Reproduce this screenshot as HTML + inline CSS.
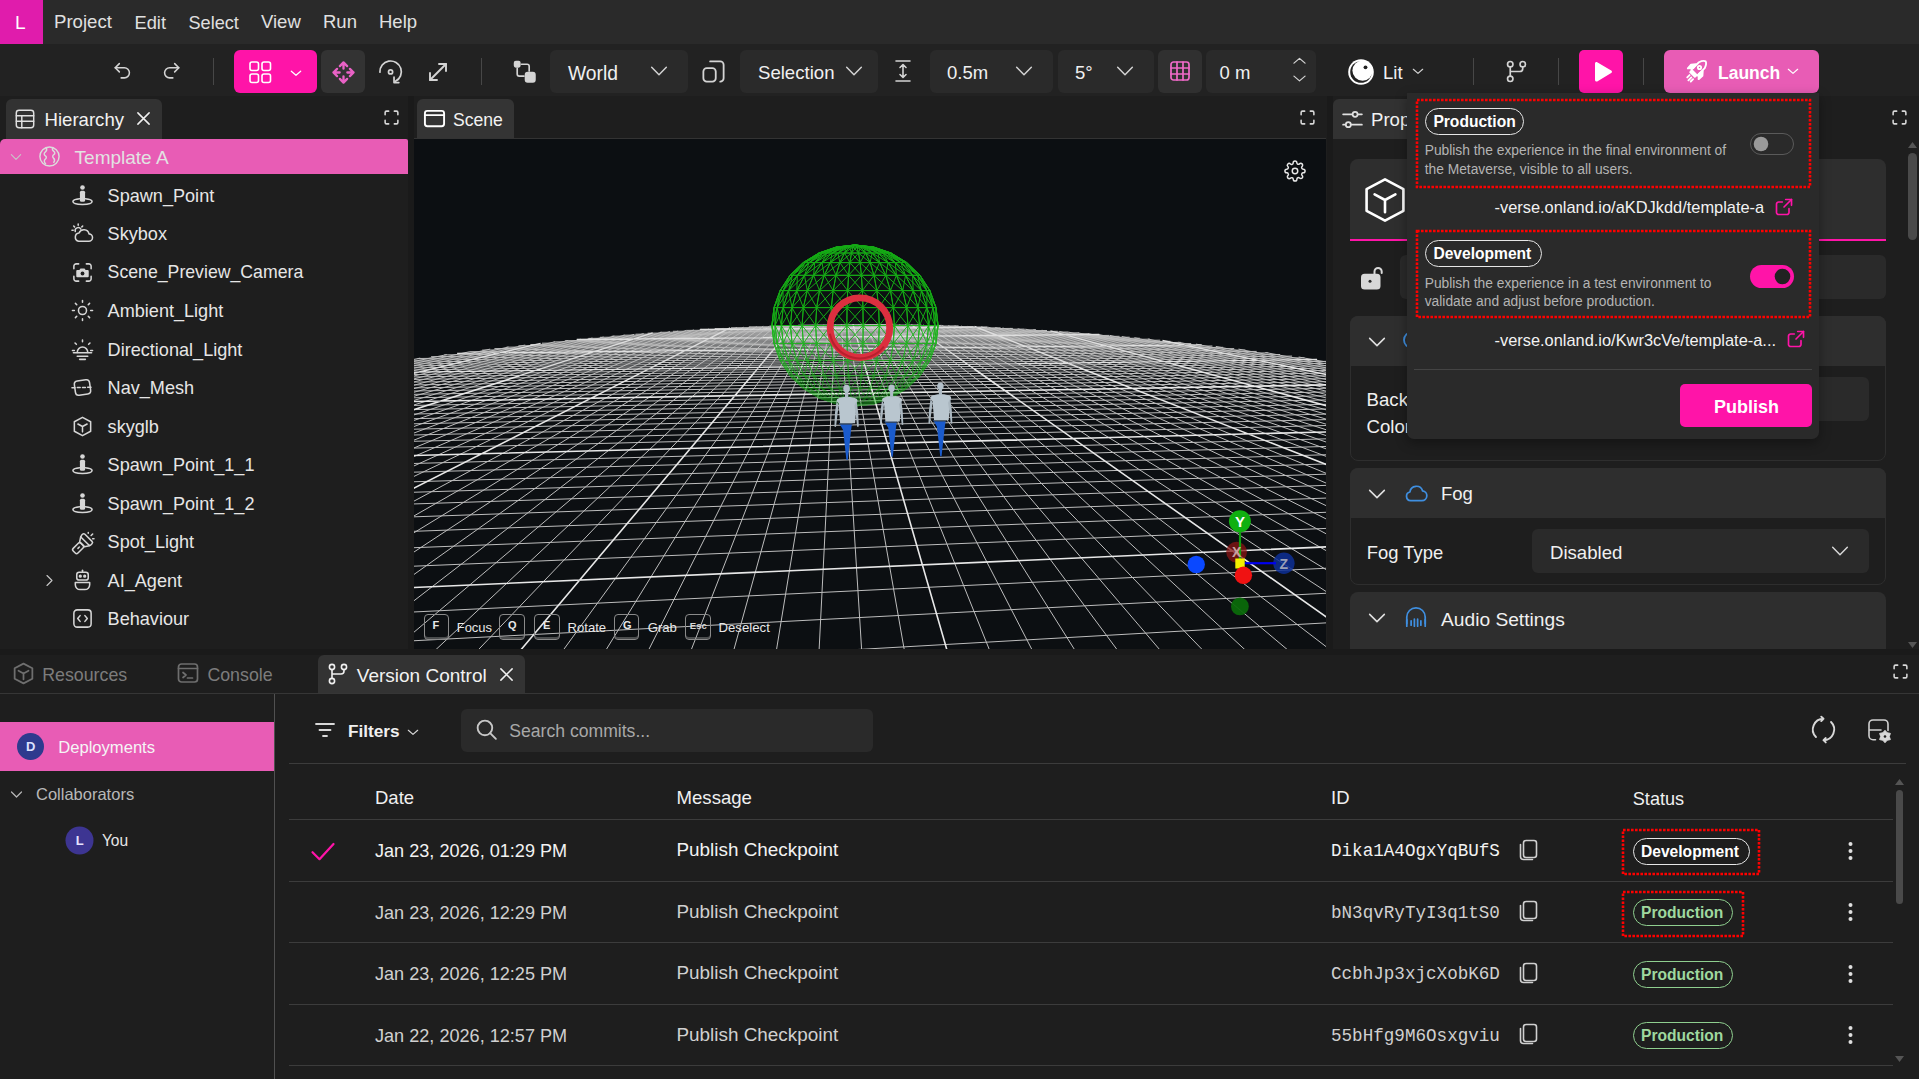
<!DOCTYPE html><html><head><meta charset="utf-8"><style>
html,body{margin:0;padding:0;width:1919px;height:1079px;overflow:hidden;background:#1e1e1e;font-family:"Liberation Sans",sans-serif}
body>div,body>svg{position:absolute}
.t{position:absolute;white-space:nowrap}
svg{overflow:visible}
</style></head><body>
<div style="left:0px;top:0px;width:1919px;height:44px;background:#2a2a2a;"></div>
<div style="left:0px;top:44px;width:1919px;height:52px;background:#222222;"></div>
<div style="left:0px;top:96px;width:1919px;height:559px;background:#1a1a1a;"></div>
<div style="left:0px;top:96px;width:408px;height:553px;background:#1e1e1e;"></div>
<div style="left:414px;top:96px;width:913px;height:553px;background:#1e1e1e;"></div>
<div style="left:1333px;top:96px;width:586px;height:553px;background:#1e1e1e;"></div>
<div style="left:0px;top:655px;width:1919px;height:424px;background:#1e1e1e;"></div>
<div style="left:0px;top:0px;width:43px;height:44px;background:#e01cac;"></div>
<div class="t" style="left:15px;top:12.85px;font-size:19px;line-height:19px;color:#ffffff;font-family:'Liberation Sans',sans-serif;">L</div>
<div class="t" style="left:54px;top:13.39px;font-size:18.6px;line-height:18.6px;color:#e0e0e0;font-family:'Liberation Sans',sans-serif;">Project</div>
<div class="t" style="left:134.5px;top:13.64px;font-size:18.3px;line-height:18.3px;color:#e0e0e0;font-family:'Liberation Sans',sans-serif;">Edit</div>
<div class="t" style="left:188.5px;top:13.81px;font-size:18.1px;line-height:18.1px;color:#e0e0e0;font-family:'Liberation Sans',sans-serif;">Select</div>
<div class="t" style="left:261px;top:13.47px;font-size:18.5px;line-height:18.5px;color:#e0e0e0;font-family:'Liberation Sans',sans-serif;">View</div>
<div class="t" style="left:323px;top:13.47px;font-size:18.5px;line-height:18.5px;color:#e0e0e0;font-family:'Liberation Sans',sans-serif;">Run</div>
<div class="t" style="left:379px;top:13.47px;font-size:18.5px;line-height:18.5px;color:#e0e0e0;font-family:'Liberation Sans',sans-serif;">Help</div>
<svg style="position:absolute;left:112px;top:60px;" width="22" height="22" viewBox="0 0 24 24" fill="none" stroke="#d4d4d4" stroke-width="1.7" stroke-linecap="round" stroke-linejoin="round"><path d="M8 13 3.5 8.5 8 4"/><path d="M3.5 8.5h10a5.5 5.5 0 0 1 0 11H10"/></svg>
<svg style="position:absolute;left:159.5px;top:60px;" width="22" height="22" viewBox="0 0 24 24" fill="none" stroke="#d4d4d4" stroke-width="1.7" stroke-linecap="round" stroke-linejoin="round"><path d="M16 13l4.5-4.5L16 4"/><path d="M20.5 8.5h-10a5.5 5.5 0 0 0 0 11H14"/></svg>
<div style="left:213px;top:58px;width:1px;height:27px;background:#474747;"></div>
<div style="left:234px;top:50px;width:83px;height:43px;background:#ff14a8;border-radius:6px"></div>
<svg style="position:absolute;left:248px;top:59.5px;" width="24" height="24" viewBox="0 0 24 24" fill="none" stroke="#ffffff" stroke-width="1.6" stroke-linecap="round" stroke-linejoin="round"><rect x="2" y="2" width="8.5" height="8.5" rx="2"/><rect x="14" y="2" width="8.5" height="8.5" rx="2"/><rect x="2" y="14" width="8.5" height="8.5" rx="2"/><rect x="14" y="14" width="8.5" height="8.5" rx="2"/></svg>
<svg style="position:absolute;left:289px;top:66px;" width="14" height="14" viewBox="0 0 24 24" fill="none" stroke="#ffffff" stroke-width="2.2" stroke-linecap="round" stroke-linejoin="round"><path d="M4 9l8 7 8-7"/></svg>
<div style="left:321px;top:50px;width:44px;height:43px;background:#333333;border-radius:6px"></div>
<svg style="position:absolute;left:331.5px;top:60.5px;" width="23" height="23" viewBox="0 0 24 24" fill="none" stroke="#ea62c6" stroke-width="2.4" stroke-linecap="round" stroke-linejoin="round"><path d="M12 1.5v6.5M8.2 5.3 12 1.5l3.8 3.8M12 22.5V16M8.2 18.7l3.8 3.8 3.8-3.8M1.5 12H8M5.3 8.2 1.5 12l3.8 3.8M22.5 12H16M18.7 8.2l3.8 3.8-3.8 3.8"/></svg>
<svg style="position:absolute;left:378px;top:59px;" width="26" height="26" viewBox="0 0 24 24" fill="none" stroke="#d4d4d4" stroke-width="1.6" stroke-linecap="round" stroke-linejoin="round"><path d="M1.75 12.2A9.9 9.9 0 1 1 16.1 20.6"/><path d="M14.8 16.8v5h4.4"/><circle cx="11.6" cy="11.9" r="1.9"/></svg>
<svg style="position:absolute;left:426px;top:60px;" width="24" height="24" viewBox="0 0 24 24" fill="none" stroke="#d4d4d4" stroke-width="1.9" stroke-linecap="round" stroke-linejoin="round"><path d="M4 20 20 4"/><path d="M13 4h7v7"/><path d="M11 20H4v-7"/></svg>
<div style="left:481px;top:58px;width:1px;height:27px;background:#474747;"></div>
<svg style="position:absolute;left:512px;top:59px;" width="25" height="25" viewBox="0 0 24 24" fill="none" stroke="#d4d4d4" stroke-width="1.6" stroke-linecap="round" stroke-linejoin="round"><rect x="2.5" y="2.5" width="5" height="5" rx="1.2" fill="#d4d4d4"/><rect x="13" y="13" width="9" height="9" rx="2" fill="#d4d4d4"/><path d="M9 5h5.5a2 2 0 0 1 2 2v4.5"/><path d="M5 9v5.5a2 2 0 0 0 2 2h4.5"/></svg>
<div style="left:550px;top:50px;width:138px;height:43px;background:#2a2a2a;border-radius:6px"></div>
<div class="t" style="left:568px;top:63.59px;font-size:19.3px;line-height:19.3px;color:#f0f0f0;font-family:'Liberation Sans',sans-serif;">World</div>
<svg style="position:absolute;left:648px;top:60px;" width="22" height="22" viewBox="0 0 24 24" fill="none" stroke="#d4d4d4" stroke-width="1.6" stroke-linecap="round" stroke-linejoin="round"><path d="M4 8l8 8 8-8"/></svg>
<svg style="position:absolute;left:700px;top:58px;" width="27" height="27" viewBox="0 0 24 24" fill="none" stroke="#d4d4d4" stroke-width="1.6" stroke-linecap="round" stroke-linejoin="round"><rect x="3" y="9" width="11" height="12" rx="3"/><path d="M9 3h9a3 3 0 0 1 3 3v12a3 3 0 0 1-3 3"/></svg>
<div style="left:740px;top:50px;width:138px;height:43px;background:#2a2a2a;border-radius:6px"></div>
<div class="t" style="left:758px;top:64.19px;font-size:18.6px;line-height:18.6px;color:#f0f0f0;font-family:'Liberation Sans',sans-serif;">Selection</div>
<svg style="position:absolute;left:843px;top:60px;" width="22" height="22" viewBox="0 0 24 24" fill="none" stroke="#d4d4d4" stroke-width="1.6" stroke-linecap="round" stroke-linejoin="round"><path d="M4 8l8 8 8-8"/></svg>
<svg style="position:absolute;left:891px;top:59px;" width="24" height="24" viewBox="0 0 24 24" fill="none" stroke="#d4d4d4" stroke-width="1.6" stroke-linecap="round" stroke-linejoin="round"><path d="M5 2h14M5 22h14M12 6v12M9 8.5l3-3 3 3M9 15.5l3 3 3-3"/></svg>
<div style="left:930px;top:50px;width:123px;height:43px;background:#2a2a2a;border-radius:6px"></div>
<div class="t" style="left:947px;top:64.28px;font-size:18.5px;line-height:18.5px;color:#f0f0f0;font-family:'Liberation Sans',sans-serif;">0.5m</div>
<svg style="position:absolute;left:1013px;top:60px;" width="22" height="22" viewBox="0 0 24 24" fill="none" stroke="#d4d4d4" stroke-width="1.6" stroke-linecap="round" stroke-linejoin="round"><path d="M4 8l8 8 8-8"/></svg>
<div style="left:1058px;top:50px;width:96px;height:43px;background:#2a2a2a;border-radius:6px"></div>
<div class="t" style="left:1075px;top:64.28px;font-size:18.5px;line-height:18.5px;color:#f0f0f0;font-family:'Liberation Sans',sans-serif;">5°</div>
<svg style="position:absolute;left:1114px;top:60px;" width="22" height="22" viewBox="0 0 24 24" fill="none" stroke="#d4d4d4" stroke-width="1.6" stroke-linecap="round" stroke-linejoin="round"><path d="M4 8l8 8 8-8"/></svg>
<div style="left:1158px;top:50px;width:44px;height:43px;background:#303030;border-radius:6px"></div>
<svg style="position:absolute;left:1168px;top:59px;" width="24" height="24" viewBox="0 0 24 24" fill="none" stroke="#f06ac8" stroke-width="1.7" stroke-linecap="round" stroke-linejoin="round"><rect x="3" y="3" width="18" height="18" rx="2.5"/><path d="M9 3v18M15 3v18M3 9h18M3 15h18"/></svg>
<div style="left:1206px;top:50px;width:110px;height:43px;background:#2a2a2a;border-radius:6px"></div>
<div class="t" style="left:1219.5px;top:64.28px;font-size:18.5px;line-height:18.5px;color:#f0f0f0;font-family:'Liberation Sans',sans-serif;">0 m</div>
<svg style="position:absolute;left:1290px;top:56px;" width="19" height="19" viewBox="0 0 24 24" fill="none" stroke="#d4d4d4" stroke-width="1.6" stroke-linecap="round" stroke-linejoin="round"><path d="M5 9l7-6 7 6"/></svg>
<svg style="position:absolute;left:1290px;top:69px;" width="19" height="19" viewBox="0 0 24 24" fill="none" stroke="#d4d4d4" stroke-width="1.6" stroke-linecap="round" stroke-linejoin="round"><path d="M5 9l7 6 7-6"/></svg>
<svg style="position:absolute;left:1347.5px;top:58.5px;" width="26" height="26" viewBox="0 0 26 26" fill="none"><circle cx="13" cy="13" r="12.8" fill="#ffffff"/><circle cx="13" cy="13" r="10.8" fill="#222222"/><circle cx="14.6" cy="11.6" r="10.2" fill="#ffffff"/><circle cx="17.5" cy="8.3" r="1.9" fill="#222222"/></svg>
<div class="t" style="left:1383px;top:64.28px;font-size:18.5px;line-height:18.5px;color:#f0f0f0;font-family:'Liberation Sans',sans-serif;">Lit</div>
<svg style="position:absolute;left:1411px;top:64px;" width="14" height="14" viewBox="0 0 24 24" fill="none" stroke="#d4d4d4" stroke-width="2" stroke-linecap="round" stroke-linejoin="round"><path d="M4 9l8 7 8-7"/></svg>
<div style="left:1473px;top:58px;width:1px;height:27px;background:#474747;"></div>
<svg style="position:absolute;left:1504px;top:59px;" width="25" height="25" viewBox="0 0 24 24" fill="none" stroke="#d4d4d4" stroke-width="1.6" stroke-linecap="round" stroke-linejoin="round"><circle cx="6" cy="5" r="2.6"/><circle cx="18" cy="5" r="2.6"/><circle cx="6" cy="19" r="2.6"/><path d="M6 7.6v8.8M18 7.6v1.4a3 3 0 0 1-3 3H6"/></svg>
<div style="left:1558px;top:58px;width:1px;height:27px;background:#474747;"></div>
<div style="left:1579px;top:50px;width:44px;height:43px;background:#ff14a8;border-radius:5px"></div>
<svg style="position:absolute;left:1590px;top:59px;" width="26" height="26" viewBox="0 0 26 26" fill="none"><path d="M5 4.5c0-1.2 1.2-1.9 2.2-1.3l14 8.3c1 .6 1 2 0 2.6l-14 8.3C6.2 23 5 22.3 5 21.1z" fill="#ffffff"/></svg>
<div style="left:1643px;top:58px;width:1px;height:27px;background:#474747;"></div>
<div style="left:1664px;top:50px;width:155px;height:43px;background:#e85cb5;border-radius:6px"></div>
<svg style="position:absolute;left:1682px;top:57px;" width="28" height="28" viewBox="0 0 24 24" fill="none" stroke="#ffffff" stroke-width="1.6" stroke-linecap="round" stroke-linejoin="round"><path d="M14.5 4.5c2.5-1.2 5-1.2 5.8-.8.4.8.4 3.3-.8 5.8l-6.5 6.5-5-5z"/><circle cx="15" cy="9" r="1.4"/><path d="M9.5 9.5 5 9.8 7.8 6.5l4.2-.3zM14.5 14.5l-.3 4.5 3.3-2.8.3-4.2z" fill="#ffffff"/><path d="M8.5 11.5 12.5 15.5 11 17 7 13z" fill="#ffffff"/><path d="M6.5 15.5l-2 2M8 17.5l-2.5 2.5M9.5 19l-2 2"/></svg>
<div class="t" style="left:1718px;top:65.12px;font-size:17.5px;line-height:17.5px;color:#ffffff;font-family:'Liberation Sans',sans-serif;font-weight:bold;">Launch</div>
<svg style="position:absolute;left:1786px;top:64px;" width="14" height="14" viewBox="0 0 24 24" fill="none" stroke="#ffffff" stroke-width="2" stroke-linecap="round" stroke-linejoin="round"><path d="M4 9l8 7 8-7"/></svg>
<div style="left:6px;top:99px;width:156px;height:40px;background:#323232;border-radius:6px 6px 0 0"></div>
<svg style="position:absolute;left:14px;top:108px;" width="22" height="22" viewBox="0 0 24 24" fill="none" stroke="#e0e0e0" stroke-width="1.6" stroke-linecap="round" stroke-linejoin="round"><rect x="2.5" y="2.5" width="19" height="19" rx="3"/><path d="M2.5 8.5h19M2.5 14.5h19M8.5 8.5v13"/></svg>
<div class="t" style="left:44.5px;top:111.19px;font-size:18.6px;line-height:18.6px;color:#f2f2f2;font-family:'Liberation Sans',sans-serif;">Hierarchy</div>
<svg style="position:absolute;left:136px;top:111px;" width="15" height="15" viewBox="0 0 24 24" fill="none" stroke="#f0f0f0" stroke-width="2.4" stroke-linecap="round" stroke-linejoin="round"><path d="M3 3l18 18M21 3 3 21"/></svg>
<svg style="position:absolute;left:382.5px;top:108.5px;" width="17" height="17" viewBox="0 0 24 24" fill="none" stroke="#d8d8d8" stroke-width="2.2" stroke-linecap="round" stroke-linejoin="round"><path d="M3 8V5a2 2 0 0 1 2-2h3M16 3h3a2 2 0 0 1 2 2v3M21 16v3a2 2 0 0 1-2 2h-3M8 21H5a2 2 0 0 1-2-2v-3"/></svg>
<div style="left:414px;top:138px;width:912px;height:1px;background:#333333;"></div>
<div style="left:417px;top:99px;width:97px;height:39px;background:#343434;border-radius:6px 6px 0 0"></div>
<svg style="position:absolute;left:423px;top:107px;" width="23" height="23" viewBox="0 0 24 24" fill="none" stroke="#ffffff" stroke-width="2" stroke-linecap="round" stroke-linejoin="round"><rect x="2" y="4" width="20" height="16" rx="2.5"/><path d="M2 8.5h20"/></svg>
<div class="t" style="left:453px;top:112.04px;font-size:17.6px;line-height:17.6px;color:#f2f2f2;font-family:'Liberation Sans',sans-serif;">Scene</div>
<svg style="position:absolute;left:1299px;top:108.5px;" width="17" height="17" viewBox="0 0 24 24" fill="none" stroke="#d8d8d8" stroke-width="2.2" stroke-linecap="round" stroke-linejoin="round"><path d="M3 8V5a2 2 0 0 1 2-2h3M16 3h3a2 2 0 0 1 2 2v3M21 16v3a2 2 0 0 1-2 2h-3M8 21H5a2 2 0 0 1-2-2v-3"/></svg>
<div style="left:1333px;top:99px;width:90px;height:40px;background:#323232;border-radius:6px 0 0 0"></div>
<svg style="position:absolute;left:1340px;top:107px;" width="25" height="25" viewBox="0 0 24 24" fill="none" stroke="#e0e0e0" stroke-width="1.7" stroke-linecap="round" stroke-linejoin="round"><path d="M3 7h18M3 17h18"/><circle cx="14.5" cy="7" r="2.4" fill="#323232"/><circle cx="8" cy="17" r="2.4" fill="#323232"/></svg>
<div class="t" style="left:1371px;top:111.19px;font-size:18.6px;line-height:18.6px;color:#f2f2f2;font-family:'Liberation Sans',sans-serif;">Prop</div>
<svg style="position:absolute;left:1891px;top:108.5px;" width="17" height="17" viewBox="0 0 24 24" fill="none" stroke="#d8d8d8" stroke-width="2.2" stroke-linecap="round" stroke-linejoin="round"><path d="M3 8V5a2 2 0 0 1 2-2h3M16 3h3a2 2 0 0 1 2 2v3M21 16v3a2 2 0 0 1-2 2h-3M8 21H5a2 2 0 0 1-2-2v-3"/></svg>
<div style="left:0px;top:139px;width:408px;height:35px;background:#e85cb5;border-radius:5px 2px 0 0"></div>
<svg style="position:absolute;left:9px;top:150px;" width="14" height="14" viewBox="0 0 24 24" fill="none" stroke="#c8c8c8" stroke-width="1.8" stroke-linecap="round" stroke-linejoin="round"><path d="M4 8l8 8 8-8"/></svg>
<svg style="position:absolute;left:38px;top:145px;" width="23" height="23" viewBox="0 0 24 24" fill="none" stroke="#dcdcdc" stroke-width="1.5" stroke-linecap="round" stroke-linejoin="round"><circle cx="12" cy="12" r="10"/><path d="M8.5 2.8c1 1.8.5 3.5-1 4.7-1.6 1.2-1.2 3 .2 3.8 1.6 1 1 2.8-.3 3.7-1.3 1-1 3 .5 4.5M15.5 2.8c-.8 1.5-.3 3 1 3.8 1.5 1 1.2 2.8 0 3.5-1.4.8-1.5 2.5-.3 3.6 1.2 1 1.3 2.8.3 4.4"/></svg>
<div class="t" style="left:74.6px;top:147.65px;font-size:19px;line-height:19px;color:#e2e2e2;font-family:'Liberation Sans',sans-serif;">Template A</div>
<svg style="position:absolute;left:71px;top:183.5px;" width="23" height="23" viewBox="0 0 24 24" fill="none" stroke="#d6d6d6" stroke-width="1.6" stroke-linecap="round" stroke-linejoin="round"><circle cx="12" cy="3.6" r="2.4" fill="#d6d6d6" stroke="none"/><rect x="9.3" y="7" width="5.4" height="11.5" rx="1.6" fill="#d6d6d6" stroke="none"/><path d="M9 15.3C4.6 15.8 2 16.9 2 18.3c0 1.8 4.5 3 10 3s10-1.2 10-3c0-1.4-2.6-2.5-7-3"/></svg>
<div class="t" style="left:107.6px;top:186.92px;font-size:18.1px;line-height:18.1px;color:#e6e6e6;font-family:'Liberation Sans',sans-serif;">Spawn_Point</div>
<svg style="position:absolute;left:71px;top:222.0px;" width="23" height="23" viewBox="0 0 24 24" fill="none" stroke="#d6d6d6" stroke-width="1.6" stroke-linecap="round" stroke-linejoin="round"><path d="M7.5 2v1.3M2.8 4.2l.9.9M12.2 4.2l-.9.9M1 8.5h1.3"/><path d="M4.5 10a3.2 3.2 0 0 1 5.8-2.6"/><path d="M8 20h10.5a3.8 3.8 0 0 0 .3-7.6A5.5 5.5 0 0 0 8.4 11.5 4.3 4.3 0 0 0 8 20z"/></svg>
<div class="t" style="left:107.6px;top:225.42px;font-size:18.1px;line-height:18.1px;color:#e6e6e6;font-family:'Liberation Sans',sans-serif;">Skybox</div>
<svg style="position:absolute;left:71px;top:260.5px;" width="23" height="23" viewBox="0 0 24 24" fill="none" stroke="#d6d6d6" stroke-width="1.6" stroke-linecap="round" stroke-linejoin="round"><path d="M3 8V5.5A2.5 2.5 0 0 1 5.5 3H8M16 3h2.5A2.5 2.5 0 0 1 21 5.5V8M21 16v2.5a2.5 2.5 0 0 1-2.5 2.5H16M8 21H5.5A2.5 2.5 0 0 1 3 18.5V16"/><path d="M6.5 9.5h2.2l1.2-1.8h4.2l1.2 1.8h2.2c.6 0 1 .4 1 1v5.5c0 .6-.4 1-1 1h-11c-.6 0-1-.4-1-1v-5.5c0-.6.4-1 1-1z" fill="#d6d6d6" stroke="none"/><circle cx="12" cy="13" r="2" fill="#1e1e1e" stroke="none"/></svg>
<div class="t" style="left:107.6px;top:264.25px;font-size:17.7px;line-height:17.7px;color:#e6e6e6;font-family:'Liberation Sans',sans-serif;">Scene_Preview_Camera</div>
<svg style="position:absolute;left:71px;top:299.0px;" width="23" height="23" viewBox="0 0 24 24" fill="none" stroke="#d6d6d6" stroke-width="1.6" stroke-linecap="round" stroke-linejoin="round"><circle cx="12" cy="12" r="4.2"/><path d="M12 1.5v2M12 20.5v2M1.5 12h2M20.5 12h2M4.6 4.6l1.4 1.4M18 18l1.4 1.4M4.6 19.4 6 18M18 6l1.4-1.4"/></svg>
<div class="t" style="left:107.6px;top:302.42px;font-size:18.1px;line-height:18.1px;color:#e6e6e6;font-family:'Liberation Sans',sans-serif;">Ambient_Light</div>
<svg style="position:absolute;left:71px;top:337.5px;" width="23" height="23" viewBox="0 0 24 24" fill="none" stroke="#d6d6d6" stroke-width="1.6" stroke-linecap="round" stroke-linejoin="round"><path d="M12 2v2M4.2 5.2l1.4 1.4M19.8 5.2l-1.4 1.4M1.5 13h2M20.5 13h2"/><path d="M6.5 15a5.5 5.5 0 0 1 11 0"/><path d="M2.5 15.5h19M6.5 19h11M9 22.3h6"/></svg>
<div class="t" style="left:107.6px;top:340.92px;font-size:18.1px;line-height:18.1px;color:#e6e6e6;font-family:'Liberation Sans',sans-serif;">Directional_Light</div>
<svg style="position:absolute;left:71px;top:376.0px;" width="23" height="23" viewBox="0 0 24 24" fill="none" stroke="#d6d6d6" stroke-width="1.6" stroke-linecap="round" stroke-linejoin="round"><g transform="rotate(-8 12 12)"><rect x="4" y="4.5" width="16" height="15" rx="3.5"/></g><path d="M1 12.3h3.2M6.6 12.1h3M12 11.9h3M17.4 11.7h3.5"/></svg>
<div class="t" style="left:107.6px;top:379.42px;font-size:18.1px;line-height:18.1px;color:#e6e6e6;font-family:'Liberation Sans',sans-serif;">Nav_Mesh</div>
<svg style="position:absolute;left:71px;top:414.5px;" width="23" height="23" viewBox="0 0 24 24" fill="none" stroke="#d6d6d6" stroke-width="1.6" stroke-linecap="round" stroke-linejoin="round"><path d="M12 2.5 20.5 7v10L12 21.5 3.5 17V7z"/><path d="M12 12 7.2 9.4M12 12l4.8-2.6M12 12v5.6"/></svg>
<div class="t" style="left:107.6px;top:417.92px;font-size:18.1px;line-height:18.1px;color:#e6e6e6;font-family:'Liberation Sans',sans-serif;">skyglb</div>
<svg style="position:absolute;left:71px;top:453.0px;" width="23" height="23" viewBox="0 0 24 24" fill="none" stroke="#d6d6d6" stroke-width="1.6" stroke-linecap="round" stroke-linejoin="round"><circle cx="12" cy="3.6" r="2.4" fill="#d6d6d6" stroke="none"/><rect x="9.3" y="7" width="5.4" height="11.5" rx="1.6" fill="#d6d6d6" stroke="none"/><path d="M9 15.3C4.6 15.8 2 16.9 2 18.3c0 1.8 4.5 3 10 3s10-1.2 10-3c0-1.4-2.6-2.5-7-3"/></svg>
<div class="t" style="left:107.6px;top:456.42px;font-size:18.1px;line-height:18.1px;color:#e6e6e6;font-family:'Liberation Sans',sans-serif;">Spawn_Point_1_1</div>
<svg style="position:absolute;left:71px;top:491.5px;" width="23" height="23" viewBox="0 0 24 24" fill="none" stroke="#d6d6d6" stroke-width="1.6" stroke-linecap="round" stroke-linejoin="round"><circle cx="12" cy="3.6" r="2.4" fill="#d6d6d6" stroke="none"/><rect x="9.3" y="7" width="5.4" height="11.5" rx="1.6" fill="#d6d6d6" stroke="none"/><path d="M9 15.3C4.6 15.8 2 16.9 2 18.3c0 1.8 4.5 3 10 3s10-1.2 10-3c0-1.4-2.6-2.5-7-3"/></svg>
<div class="t" style="left:107.6px;top:494.92px;font-size:18.1px;line-height:18.1px;color:#e6e6e6;font-family:'Liberation Sans',sans-serif;">Spawn_Point_1_2</div>
<svg style="position:absolute;left:71px;top:530.0px;" width="23" height="23" viewBox="0 0 24 24" fill="none" stroke="#d6d6d6" stroke-width="1.6" stroke-linecap="round" stroke-linejoin="round"><g transform="translate(-1.2 3.6) rotate(45 12 12)"><rect x="5" y="1.5" width="14" height="5" rx="1.8"/><path d="M5.5 6.5 8.5 11h7l3-4.5"/><rect x="8.5" y="11" width="7" height="11.5" rx="2"/><path d="M12 15v2"/></g><path d="M18 2.6v.9M22.6 4.2l-1.6 1.6M24 9.2h-1.4"/></svg>
<div class="t" style="left:107.6px;top:533.41px;font-size:18.1px;line-height:18.1px;color:#e6e6e6;font-family:'Liberation Sans',sans-serif;">Spot_Light</div>
<svg style="position:absolute;left:71px;top:568.5px;" width="23" height="23" viewBox="0 0 24 24" fill="none" stroke="#d6d6d6" stroke-width="1.6" stroke-linecap="round" stroke-linejoin="round"><rect x="6" y="3.5" width="12" height="8" rx="2.5"/><path d="M12 1.2v2.3"/><circle cx="9.7" cy="7.5" r=".9" fill="#d6d6d6"/><circle cx="14.3" cy="7.5" r=".9" fill="#d6d6d6"/><path d="M4.5 14h15v2.5a5 5 0 0 1-5 5h-5a5 5 0 0 1-5-5z"/></svg>
<div class="t" style="left:107.6px;top:571.91px;font-size:18.1px;line-height:18.1px;color:#e6e6e6;font-family:'Liberation Sans',sans-serif;">AI_Agent</div>
<svg style="position:absolute;left:71px;top:607.0px;" width="23" height="23" viewBox="0 0 24 24" fill="none" stroke="#d6d6d6" stroke-width="1.6" stroke-linecap="round" stroke-linejoin="round"><rect x="3" y="3" width="18" height="18" rx="3.5"/><path d="M9.5 9 7 12l2.5 3M14.5 9 17 12l-2.5 3"/></svg>
<div class="t" style="left:107.6px;top:610.41px;font-size:18.1px;line-height:18.1px;color:#e6e6e6;font-family:'Liberation Sans',sans-serif;">Behaviour</div>
<svg style="position:absolute;left:42px;top:572.8px;" width="15" height="15" viewBox="0 0 24 24" fill="none" stroke="#c8c8c8" stroke-width="1.8" stroke-linecap="round" stroke-linejoin="round"><path d="M8 4l8 8-8 8"/></svg>
<div style="left:1349.5px;top:159px;width:536px;height:82px;background:#2e2e2e;border-radius:8px 8px 0 0;border-bottom:2px solid #ff14a8;box-sizing:border-box"></div>
<svg style="position:absolute;left:1358.9px;top:173.7px;" width="52" height="52" viewBox="0 0 24 24" fill="none" stroke="#ffffff" stroke-width="1.2" stroke-linecap="round" stroke-linejoin="round"><path d="M12 2.5 20.5 7v10L12 21.5 3.5 17V7z"/><path d="M12 12 7.2 9.4M12 12l4.8-2.6M12 12v5.6"/></svg>
<svg style="position:absolute;left:1360px;top:264px;" width="24" height="27" viewBox="0 0 24 27" fill="none"><path d="M14.5 10V7.5a3.6 3.6 0 0 1 7.2 0V9" stroke="#d8d8d8" stroke-width="2" stroke-linecap="round"/><rect x="1" y="9.8" width="19.5" height="15.8" rx="3.6" fill="#d8d8d8"/><circle cx="10" cy="17.2" r="1.5" fill="#2a2a2a"/></svg>
<div style="left:1400px;top:255px;width:486px;height:44px;background:#2a2a2a;border-radius:6px"></div>
<div style="left:1349.5px;top:316px;width:536px;height:145px;background:#1e1e1e;border-radius:8px;border:1px solid #2e2e2e;box-sizing:border-box"></div>
<div style="left:1349.5px;top:316px;width:536px;height:50px;background:#2e2e2e;border-radius:8px 8px 0 0"></div>
<svg style="position:absolute;left:1366px;top:331px;" width="22" height="22" viewBox="0 0 24 24" fill="none" stroke="#e0e0e0" stroke-width="1.7" stroke-linecap="round" stroke-linejoin="round"><path d="M4 8l8 8 8-8"/></svg>
<svg style="position:absolute;left:1400px;top:330px;" width="16" height="20" viewBox="0 0 16 20" fill="none"><path d="M12 2a8 8 0 1 0 0 16" stroke="#3f8fe0" stroke-width="1.8" fill="none"/></svg>
<div class="t" style="left:1366.6px;top:391.19px;font-size:18.6px;line-height:18.6px;color:#f0f0f0;font-family:'Liberation Sans',sans-serif;">Backg</div>
<div class="t" style="left:1366.6px;top:418.19px;font-size:18.6px;line-height:18.6px;color:#f0f0f0;font-family:'Liberation Sans',sans-serif;">Color</div>
<div style="left:1532px;top:377px;width:337px;height:44px;background:#2a2a2a;border-radius:6px"></div>
<div style="left:1349.5px;top:468px;width:536px;height:117px;background:#1e1e1e;border-radius:8px;border:1px solid #2e2e2e;box-sizing:border-box"></div>
<div style="left:1349.5px;top:468px;width:536px;height:50px;background:#2e2e2e;border-radius:8px 8px 0 0"></div>
<svg style="position:absolute;left:1366px;top:483px;" width="22" height="22" viewBox="0 0 24 24" fill="none" stroke="#e0e0e0" stroke-width="1.7" stroke-linecap="round" stroke-linejoin="round"><path d="M4 8l8 8 8-8"/></svg>
<svg style="position:absolute;left:1403px;top:480px;" width="26" height="26" viewBox="0 0 24 24" fill="none" stroke="#3f8fe0" stroke-width="1.6" stroke-linecap="round" stroke-linejoin="round"><path d="M7 19h10.5a4.5 4.5 0 0 0 .6-8.96A6 6 0 0 0 6.4 11.1 4 4 0 0 0 7 19z"/></svg>
<div class="t" style="left:1441px;top:485.27px;font-size:18.5px;line-height:18.5px;color:#f0f0f0;font-family:'Liberation Sans',sans-serif;">Fog</div>
<div class="t" style="left:1366.8px;top:544.36px;font-size:18.4px;line-height:18.4px;color:#f0f0f0;font-family:'Liberation Sans',sans-serif;">Fog Type</div>
<div style="left:1532px;top:529px;width:337px;height:44px;background:#2a2a2a;border-radius:6px"></div>
<div class="t" style="left:1550px;top:544.19px;font-size:18.6px;line-height:18.6px;color:#f0f0f0;font-family:'Liberation Sans',sans-serif;">Disabled</div>
<svg style="position:absolute;left:1829px;top:540px;" width="22" height="22" viewBox="0 0 24 24" fill="none" stroke="#d8d8d8" stroke-width="1.6" stroke-linecap="round" stroke-linejoin="round"><path d="M4 8l8 8 8-8"/></svg>
<div style="left:1349.5px;top:592px;width:536px;height:57px;background:#2e2e2e;border-radius:8px 8px 0 0"></div>
<svg style="position:absolute;left:1366px;top:607px;" width="22" height="22" viewBox="0 0 24 24" fill="none" stroke="#e0e0e0" stroke-width="1.7" stroke-linecap="round" stroke-linejoin="round"><path d="M4 8l8 8 8-8"/></svg>
<svg style="position:absolute;left:1403px;top:604px;" width="26" height="26" viewBox="0 0 24 24" fill="none" stroke="#3f8fe0" stroke-width="1.6" stroke-linecap="round" stroke-linejoin="round"><path d="M3.5 18v-6a8.5 8.5 0 0 1 17 0v6"/><path d="M3.5 14.5v6M20.5 14.5v6M7.5 15.5v4M10.5 14v6.5M13.5 14v6.5M16.5 15.5v4"/></svg>
<div class="t" style="left:1441px;top:609.68px;font-size:19.2px;line-height:19.2px;color:#f0f0f0;font-family:'Liberation Sans',sans-serif;">Audio Settings</div>
<div style="left:1908px;top:153px;width:9px;height:87px;background:#4a4a4a;border-radius:5px"></div>
<svg style="position:absolute;left:1907px;top:141px;" width="11" height="8" viewBox="0 0 11 8" fill="none"><path d="M1 7 5.5 1 10 7z" fill="#555"/></svg>
<svg style="position:absolute;left:1907px;top:641px;" width="11" height="8" viewBox="0 0 11 8" fill="none"><path d="M1 1 5.5 7 10 1z" fill="#555"/></svg>
<div style="left:1407px;top:93px;width:412px;height:346px;background:#2a2a2a;border-radius:0 0 7px 7px;box-shadow:0 4px 12px rgba(0,0,0,.35)"></div>
<svg style="position:absolute;left:1416px;top:99px;" width="395" height="89" viewBox="0 0 395 89" fill="none"><rect x="1" y="1" width="393" height="87" stroke="#ff0000" stroke-width="2.6" stroke-dasharray="2.6 1.4" fill="none"/></svg>
<div style="left:1425px;top:108px;width:99px;height:27px;background:transparent;border:1.6px solid #e6e6e6;border-radius:13.5px;box-sizing:border-box"></div>
<div class="t" style="left:1433.4px;top:113.54px;font-size:15.6px;line-height:15.6px;color:#ffffff;font-family:'Liberation Sans',sans-serif;font-weight:bold;">Production</div>
<div class="t" style="left:1424.7px;top:144.27px;font-size:13.8px;line-height:13.8px;color:#b4b4b4;font-family:'Liberation Sans',sans-serif;">Publish the experience in the final environment of</div>
<div class="t" style="left:1424.7px;top:163.27px;font-size:13.8px;line-height:13.8px;color:#b4b4b4;font-family:'Liberation Sans',sans-serif;">the Metaverse, visible to all users.</div>
<div style="left:1749.5px;top:133px;width:44.5px;height:22px;background:transparent;border:1.5px solid #5a5a5a;border-radius:11px;box-sizing:border-box"></div>
<svg style="position:absolute;left:1750px;top:133px;" width="22" height="22" viewBox="0 0 22 22" fill="none"><circle cx="11" cy="11" r="7.3" fill="#9a9a9a"/></svg>
<div class="t" style="left:1494.5px;top:199.06px;font-size:16.4px;line-height:16.4px;color:#f2f2f2;font-family:'Liberation Sans',sans-serif;">-verse.onland.io/aKDJkdd/template-a</div>
<svg style="position:absolute;left:1774px;top:197px;" width="20" height="20" viewBox="0 0 24 24" fill="none" stroke="#ff14a8" stroke-width="2" stroke-linecap="round" stroke-linejoin="round"><path d="M14 3h7v7"/><path d="M21 3l-9 9"/><path d="M18 14v4.5a2.5 2.5 0 0 1-2.5 2.5h-10A2.5 2.5 0 0 1 3 18.5v-10A2.5 2.5 0 0 1 5.5 6H10"/></svg>
<svg style="position:absolute;left:1416px;top:230px;" width="395" height="88" viewBox="0 0 395 88" fill="none"><rect x="1" y="1" width="393" height="86" stroke="#ff0000" stroke-width="2.6" stroke-dasharray="2.6 1.4" fill="none"/></svg>
<div style="left:1425px;top:240px;width:117px;height:27px;background:transparent;border:1.6px solid #e6e6e6;border-radius:13.5px;box-sizing:border-box"></div>
<div class="t" style="left:1433.4px;top:245.74px;font-size:15.6px;line-height:15.6px;color:#ffffff;font-family:'Liberation Sans',sans-serif;font-weight:bold;">Development</div>
<div class="t" style="left:1424.7px;top:276.77px;font-size:13.8px;line-height:13.8px;color:#b4b4b4;font-family:'Liberation Sans',sans-serif;">Publish the experience in a test environment to</div>
<div class="t" style="left:1424.7px;top:295.27px;font-size:13.8px;line-height:13.8px;color:#b4b4b4;font-family:'Liberation Sans',sans-serif;">validate and adjust before production.</div>
<div style="left:1749.5px;top:264.5px;width:44.5px;height:23px;background:#ff14a8;border-radius:11.5px"></div>
<svg style="position:absolute;left:1771px;top:264.5px;" width="23" height="23" viewBox="0 0 23 23" fill="none"><circle cx="11.5" cy="11.5" r="7.8" fill="#222222"/></svg>
<div class="t" style="left:1494.5px;top:332.06px;font-size:16.4px;line-height:16.4px;color:#f2f2f2;font-family:'Liberation Sans',sans-serif;">-verse.onland.io/Kwr3cVe/template-a...</div>
<svg style="position:absolute;left:1786px;top:329px;" width="20" height="20" viewBox="0 0 24 24" fill="none" stroke="#ff14a8" stroke-width="2" stroke-linecap="round" stroke-linejoin="round"><path d="M14 3h7v7"/><path d="M21 3l-9 9"/><path d="M18 14v4.5a2.5 2.5 0 0 1-2.5 2.5h-10A2.5 2.5 0 0 1 3 18.5v-10A2.5 2.5 0 0 1 5.5 6H10"/></svg>
<div style="left:1414px;top:368.5px;width:398px;height:1px;background:#444444;"></div>
<div style="left:1680px;top:384px;width:132px;height:43px;background:#ff14a8;border-radius:5px"></div>
<div class="t" style="left:1714px;top:397.70px;font-size:18px;line-height:18px;color:#ffffff;font-family:'Liberation Sans',sans-serif;font-weight:bold;">Publish</div>
<svg style="position:absolute;left:11px;top:661px;" width="25" height="25" viewBox="0 0 24 24" fill="none" stroke="#6e6e6e" stroke-width="1.7" stroke-linecap="round" stroke-linejoin="round"><path d="M12 2.5 20.5 7v10L12 21.5 3.5 17V7z"/><path d="M12 12 7.2 9.4M12 12l4.8-2.6M12 12v5.6"/></svg>
<div class="t" style="left:42.2px;top:666.87px;font-size:17.8px;line-height:17.8px;color:#7c7c7c;font-family:'Liberation Sans',sans-serif;">Resources</div>
<svg style="position:absolute;left:176px;top:661px;" width="24" height="24" viewBox="0 0 24 24" fill="none" stroke="#6e6e6e" stroke-width="1.7" stroke-linecap="round" stroke-linejoin="round"><rect x="2.5" y="3" width="19" height="18" rx="3"/><path d="M2.5 7.5h19M7 11.5l3 2.5-3 2.5M11.5 17h5"/></svg>
<div class="t" style="left:207.4px;top:666.87px;font-size:17.8px;line-height:17.8px;color:#7c7c7c;font-family:'Liberation Sans',sans-serif;">Console</div>
<div style="left:318px;top:655px;width:207px;height:38px;background:#333333;border-radius:6px 6px 0 0"></div>
<svg style="position:absolute;left:326px;top:662px;" width="24" height="24" viewBox="0 0 24 24" fill="none" stroke="#f0f0f0" stroke-width="1.6" stroke-linecap="round" stroke-linejoin="round"><circle cx="6" cy="5" r="2.6"/><circle cx="18" cy="5" r="2.6"/><circle cx="6" cy="19" r="2.6"/><path d="M6 7.6v8.8M18 7.6v1.4a3 3 0 0 1-3 3H6"/></svg>
<div class="t" style="left:356.8px;top:665.85px;font-size:19px;line-height:19px;color:#f2f2f2;font-family:'Liberation Sans',sans-serif;">Version Control</div>
<svg style="position:absolute;left:499px;top:667px;" width="15" height="15" viewBox="0 0 24 24" fill="none" stroke="#f0f0f0" stroke-width="2.4" stroke-linecap="round" stroke-linejoin="round"><path d="M3 3l18 18M21 3 3 21"/></svg>
<svg style="position:absolute;left:1891.5px;top:663px;" width="17" height="17" viewBox="0 0 24 24" fill="none" stroke="#d8d8d8" stroke-width="2.2" stroke-linecap="round" stroke-linejoin="round"><path d="M3 8V5a2 2 0 0 1 2-2h3M16 3h3a2 2 0 0 1 2 2v3M21 16v3a2 2 0 0 1-2 2h-3M8 21H5a2 2 0 0 1-2-2v-3"/></svg>
<div style="left:0px;top:693px;width:1919px;height:1px;background:#363636;"></div>
<div style="left:274px;top:694px;width:1px;height:385px;background:#505050;"></div>
<div style="left:0px;top:722px;width:274px;height:49px;background:#e85cb5;"></div>
<svg style="position:absolute;left:16px;top:732px;" width="29" height="29" viewBox="0 0 29 29" fill="none"><circle cx="14.5" cy="14.5" r="13.5" fill="#2e3a8e"/></svg>
<div class="t" style="left:25.9px;top:740.15px;font-size:13px;line-height:13px;color:#dce2ff;font-family:'Liberation Sans',sans-serif;font-weight:bold;">D</div>
<div class="t" style="left:58.2px;top:740.39px;font-size:16.6px;line-height:16.6px;color:#f5f5f5;font-family:'Liberation Sans',sans-serif;">Deployments</div>
<svg style="position:absolute;left:9px;top:787px;" width="15" height="15" viewBox="0 0 24 24" fill="none" stroke="#b8b8b8" stroke-width="1.9" stroke-linecap="round" stroke-linejoin="round"><path d="M4 8l8 8 8-8"/></svg>
<div class="t" style="left:36px;top:786.48px;font-size:16.5px;line-height:16.5px;color:#b8b8b8;font-family:'Liberation Sans',sans-serif;">Collaborators</div>
<svg style="position:absolute;left:65px;top:826px;" width="29" height="29" viewBox="0 0 29 29" fill="none"><circle cx="14.5" cy="14.5" r="14" fill="#3d3592"/></svg>
<div class="t" style="left:75.8px;top:833.65px;font-size:13px;line-height:13px;color:#e6e2ff;font-family:'Liberation Sans',sans-serif;font-weight:bold;">L</div>
<div class="t" style="left:101.9px;top:833.24px;font-size:15.6px;line-height:15.6px;color:#e6e6e6;font-family:'Liberation Sans',sans-serif;">You</div>
<svg style="position:absolute;left:313px;top:718px;" width="24" height="24" viewBox="0 0 24 24" fill="none" stroke="#d8d8d8" stroke-width="1.8" stroke-linecap="round" stroke-linejoin="round"><path d="M3 6h18M6.5 12h11M10 18h4"/></svg>
<div class="t" style="left:348px;top:722.88px;font-size:17.2px;line-height:17.2px;color:#f0f0f0;font-family:'Liberation Sans',sans-serif;font-weight:bold;">Filters</div>
<svg style="position:absolute;left:406px;top:725px;" width="14" height="14" viewBox="0 0 24 24" fill="none" stroke="#d8d8d8" stroke-width="2" stroke-linecap="round" stroke-linejoin="round"><path d="M4 9l8 7 8-7"/></svg>
<div style="left:461px;top:708.5px;width:412px;height:43.5px;background:#2a2a2a;border-radius:6px"></div>
<svg style="position:absolute;left:474px;top:717px;" width="25" height="25" viewBox="0 0 24 24" fill="none" stroke="#c8c8c8" stroke-width="1.8" stroke-linecap="round" stroke-linejoin="round"><circle cx="10.5" cy="10.5" r="7"/><path d="M15.5 15.5 21 21"/></svg>
<div class="t" style="left:509.3px;top:722.54px;font-size:17.6px;line-height:17.6px;color:#a8a8a8;font-family:'Liberation Sans',sans-serif;">Search commits...</div>
<svg style="position:absolute;left:1810.2px;top:716.2px;" width="27" height="27" viewBox="0 0 24 24" fill="none" stroke="#d8d8d8" stroke-width="1.7" stroke-linecap="round" stroke-linejoin="round"><path d="M12 2.5A9.5 9.5 0 0 0 5.3 18.7M10 0.6l2 1.9-2 2M18.7 5.3A9.5 9.5 0 0 1 12 21.5M14 19.6l-2 1.9 2 2"/></svg>
<svg style="position:absolute;left:1867px;top:718px;" width="27" height="27" viewBox="0 0 27 27" fill="none"><path d="M8.5 21.7H6a4 4 0 0 1-4-4V6a4 4 0 0 1 4-4h11a4 4 0 0 1 4 4v6.5M2 12h12" stroke="#d0d0d0" stroke-width="1.6" stroke-linecap="round" fill="none"/><path d="M18.00 12.30L20.15 14.78L23.37 15.40L22.30 18.50L23.37 21.60L20.15 22.22L18.00 24.70L15.85 22.22L12.63 21.60L13.70 18.50L12.63 15.40L15.85 14.78z" fill="#d8d8d8" stroke="#d8d8d8" stroke-width="1" stroke-linejoin="round"/><circle cx="18" cy="18.5" r="1.3" fill="#1e1e1e"/></svg>
<div style="left:289px;top:763px;width:1617px;height:1px;background:#3c3c3c;"></div>
<div class="t" style="left:375px;top:789.27px;font-size:18.5px;line-height:18.5px;color:#f0f0f0;font-family:'Liberation Sans',sans-serif;">Date</div>
<div class="t" style="left:676.5px;top:789.19px;font-size:18.6px;line-height:18.6px;color:#f0f0f0;font-family:'Liberation Sans',sans-serif;">Message</div>
<div class="t" style="left:1331px;top:789.27px;font-size:18.5px;line-height:18.5px;color:#f0f0f0;font-family:'Liberation Sans',sans-serif;">ID</div>
<div class="t" style="left:1632.8px;top:789.62px;font-size:18.1px;line-height:18.1px;color:#f0f0f0;font-family:'Liberation Sans',sans-serif;">Status</div>
<div style="left:289px;top:819px;width:1604px;height:1px;background:#3c3c3c;"></div>
<svg style="position:absolute;left:309px;top:837px;" width="28" height="28" viewBox="0 0 24 24" fill="none" stroke="#ff14a8" stroke-width="1.9" stroke-linecap="round" stroke-linejoin="round"><path d="M3 13l6 6L21 6"/></svg>
<div class="t" style="left:375px;top:842.12px;font-size:18.1px;line-height:18.1px;color:#f2f2f2;font-family:'Liberation Sans',sans-serif;">Jan 23, 2026, 01:29 PM</div>
<div class="t" style="left:676.5px;top:841.43px;font-size:18.9px;line-height:18.9px;color:#f2f2f2;font-family:'Liberation Sans',sans-serif;">Publish Checkpoint</div>
<div class="t" style="left:1331px;top:843.12px;font-size:17.6px;line-height:17.6px;color:#f2f2f2;font-family:'Liberation Mono',monospace;">Dika1A4OgxYqBUfS</div>
<svg style="position:absolute;left:1516px;top:837.5px;" width="24" height="24" viewBox="0 0 24 24" fill="none" stroke="#d0d0d0" stroke-width="1.6" stroke-linecap="round" stroke-linejoin="round"><rect x="7.5" y="2.5" width="13" height="17" rx="2.5"/><path d="M4.5 6.5v12a3 3 0 0 0 3 3h9"/></svg>
<svg style="position:absolute;left:1622px;top:829.0px;" width="138" height="46" viewBox="0 0 138 46" fill="none"><rect x="1" y="1" width="136" height="44" stroke="#ff0000" stroke-width="2.6" stroke-dasharray="2.6 1.4" fill="none"/></svg>
<div style="left:1632.5px;top:837.5px;width:117px;height:27px;background:transparent;border:1.6px solid #e6e6e6;border-radius:13.5px;box-sizing:border-box"></div>
<div class="t" style="left:1641px;top:843.74px;font-size:15.6px;line-height:15.6px;color:#ffffff;font-family:'Liberation Sans',sans-serif;font-weight:bold;">Development</div>
<svg style="position:absolute;left:1845px;top:840.5px;" width="11" height="20" viewBox="0 0 11 20" fill="none"><circle cx="5.5" cy="3" r="2" fill="#e0e0e0"/><circle cx="5.5" cy="10" r="2" fill="#e0e0e0"/><circle cx="5.5" cy="17" r="2" fill="#e0e0e0"/></svg>
<div style="left:289px;top:880.5px;width:1604px;height:1px;background:#3c3c3c;"></div>
<div class="t" style="left:375px;top:903.62px;font-size:18.1px;line-height:18.1px;color:#d0d0d0;font-family:'Liberation Sans',sans-serif;">Jan 23, 2026, 12:29 PM</div>
<div class="t" style="left:676.5px;top:902.93px;font-size:18.9px;line-height:18.9px;color:#d0d0d0;font-family:'Liberation Sans',sans-serif;">Publish Checkpoint</div>
<div class="t" style="left:1331px;top:904.62px;font-size:17.6px;line-height:17.6px;color:#d0d0d0;font-family:'Liberation Mono',monospace;">bN3qvRyTyI3q1tS0</div>
<svg style="position:absolute;left:1516px;top:899.0px;" width="24" height="24" viewBox="0 0 24 24" fill="none" stroke="#d0d0d0" stroke-width="1.6" stroke-linecap="round" stroke-linejoin="round"><rect x="7.5" y="2.5" width="13" height="17" rx="2.5"/><path d="M4.5 6.5v12a3 3 0 0 0 3 3h9"/></svg>
<svg style="position:absolute;left:1622px;top:890.5px;" width="122" height="46" viewBox="0 0 122 46" fill="none"><rect x="1" y="1" width="120" height="44" stroke="#ff0000" stroke-width="2.6" stroke-dasharray="2.6 1.4" fill="none"/></svg>
<div style="left:1632.5px;top:899.0px;width:100px;height:27px;background:transparent;border:1.6px solid #8fcf8f;border-radius:13.5px;box-sizing:border-box"></div>
<div class="t" style="left:1641px;top:905.24px;font-size:15.6px;line-height:15.6px;color:#9fd89f;font-family:'Liberation Sans',sans-serif;font-weight:bold;">Production</div>
<svg style="position:absolute;left:1845px;top:902.0px;" width="11" height="20" viewBox="0 0 11 20" fill="none"><circle cx="5.5" cy="3" r="2" fill="#e0e0e0"/><circle cx="5.5" cy="10" r="2" fill="#e0e0e0"/><circle cx="5.5" cy="17" r="2" fill="#e0e0e0"/></svg>
<div style="left:289px;top:942.0px;width:1604px;height:1px;background:#3c3c3c;"></div>
<div class="t" style="left:375px;top:965.12px;font-size:18.1px;line-height:18.1px;color:#d0d0d0;font-family:'Liberation Sans',sans-serif;">Jan 23, 2026, 12:25 PM</div>
<div class="t" style="left:676.5px;top:964.43px;font-size:18.9px;line-height:18.9px;color:#d0d0d0;font-family:'Liberation Sans',sans-serif;">Publish Checkpoint</div>
<div class="t" style="left:1331px;top:966.12px;font-size:17.6px;line-height:17.6px;color:#d0d0d0;font-family:'Liberation Mono',monospace;">CcbhJp3xjcXobK6D</div>
<svg style="position:absolute;left:1516px;top:960.5px;" width="24" height="24" viewBox="0 0 24 24" fill="none" stroke="#d0d0d0" stroke-width="1.6" stroke-linecap="round" stroke-linejoin="round"><rect x="7.5" y="2.5" width="13" height="17" rx="2.5"/><path d="M4.5 6.5v12a3 3 0 0 0 3 3h9"/></svg>
<div style="left:1632.5px;top:960.5px;width:100px;height:27px;background:transparent;border:1.6px solid #8fcf8f;border-radius:13.5px;box-sizing:border-box"></div>
<div class="t" style="left:1641px;top:966.74px;font-size:15.6px;line-height:15.6px;color:#9fd89f;font-family:'Liberation Sans',sans-serif;font-weight:bold;">Production</div>
<svg style="position:absolute;left:1845px;top:963.5px;" width="11" height="20" viewBox="0 0 11 20" fill="none"><circle cx="5.5" cy="3" r="2" fill="#e0e0e0"/><circle cx="5.5" cy="10" r="2" fill="#e0e0e0"/><circle cx="5.5" cy="17" r="2" fill="#e0e0e0"/></svg>
<div style="left:289px;top:1003.5px;width:1604px;height:1px;background:#3c3c3c;"></div>
<div class="t" style="left:375px;top:1026.62px;font-size:18.1px;line-height:18.1px;color:#d0d0d0;font-family:'Liberation Sans',sans-serif;">Jan 22, 2026, 12:57 PM</div>
<div class="t" style="left:676.5px;top:1025.93px;font-size:18.9px;line-height:18.9px;color:#d0d0d0;font-family:'Liberation Sans',sans-serif;">Publish Checkpoint</div>
<div class="t" style="left:1331px;top:1027.62px;font-size:17.6px;line-height:17.6px;color:#d0d0d0;font-family:'Liberation Mono',monospace;">55bHfg9M6Osxgviu</div>
<svg style="position:absolute;left:1516px;top:1022.0px;" width="24" height="24" viewBox="0 0 24 24" fill="none" stroke="#d0d0d0" stroke-width="1.6" stroke-linecap="round" stroke-linejoin="round"><rect x="7.5" y="2.5" width="13" height="17" rx="2.5"/><path d="M4.5 6.5v12a3 3 0 0 0 3 3h9"/></svg>
<div style="left:1632.5px;top:1022.0px;width:100px;height:27px;background:transparent;border:1.6px solid #8fcf8f;border-radius:13.5px;box-sizing:border-box"></div>
<div class="t" style="left:1641px;top:1028.24px;font-size:15.6px;line-height:15.6px;color:#9fd89f;font-family:'Liberation Sans',sans-serif;font-weight:bold;">Production</div>
<svg style="position:absolute;left:1845px;top:1025.0px;" width="11" height="20" viewBox="0 0 11 20" fill="none"><circle cx="5.5" cy="3" r="2" fill="#e0e0e0"/><circle cx="5.5" cy="10" r="2" fill="#e0e0e0"/><circle cx="5.5" cy="17" r="2" fill="#e0e0e0"/></svg>
<div style="left:289px;top:1065.0px;width:1604px;height:1px;background:#3c3c3c;"></div>
<div style="left:1896px;top:790px;width:7px;height:114px;background:#4a4a4a;border-radius:4px"></div>
<svg style="position:absolute;left:1894px;top:778px;" width="11" height="8" viewBox="0 0 11 8" fill="none"><path d="M1 7 5.5 1 10 7z" fill="#555"/></svg>
<svg style="position:absolute;left:1894px;top:1055px;" width="11" height="8" viewBox="0 0 11 8" fill="none"><path d="M1 1 5.5 7 10 1z" fill="#555"/></svg>
<svg style="position:absolute;left:414px;top:139px;overflow:hidden" width="912" height="510" viewBox="0 0 912 510"><rect width="912" height="510" fill="#0c0f12"/><path d="M-5.0 221.4L6.2 219.1M-5.0 223.5L32.8 215.6M-5.0 225.6L55.8 212.7M-5.0 227.9L76.2 210.1M-5.0 230.3L94.5 208.0M-5.0 232.8L111.2 206.0M-5.0 238.2L140.8 202.8M-5.0 241.1L154.1 201.4M-5.0 244.2L166.6 200.2M-5.0 247.5L178.4 199.0M-5.0 251.0L189.6 198.0M-5.0 254.7L200.3 197.0M-5.0 258.7L210.5 196.1M-5.0 262.9L220.2 195.3M-5.0 267.5L229.6 194.5M-5.0 277.6L247.4 193.2M-5.0 283.2L255.9 192.5M-5.0 289.3L264.1 192.0M-5.0 295.9L272.1 191.4M-5.0 303.1L279.8 190.9M-5.0 311.0L287.4 190.4M-5.0 319.7L294.8 190.0M-5.0 329.2L302.0 189.6M-5.0 339.8L309.1 189.2M-5.0 364.8L322.9 188.5M-5.0 379.8L329.6 188.2M-5.0 396.8L336.2 187.9M-5.0 416.3L342.7 187.6M-5.0 439.0L349.2 187.3M-5.0 465.6L355.5 187.1M-5.0 497.4L361.7 186.9M17.2 515.0L367.9 186.6M60.3 515.0L374.1 186.5M146.4 515.0L386.2 186.1M189.5 515.0L392.1 186.0M232.6 515.0L398.1 185.8M275.6 515.0L404.0 185.7M318.7 515.0L409.8 185.6M361.8 515.0L415.7 185.5M404.9 515.0L421.5 185.5M447.9 515.0L427.3 185.4M491.0 515.0L433.1 185.3M577.1 515.0L444.7 185.3M620.2 515.0L450.5 185.3M663.3 515.0L456.3 185.3M706.3 515.0L462.1 185.3M749.4 515.0L467.9 185.3M792.5 515.0L473.7 185.4M835.6 515.0L479.6 185.4M878.6 515.0L485.5 185.5M917.0 511.4L491.4 185.6M917.0 455.7L503.3 185.8M917.0 433.6L509.4 185.9M917.0 414.4L515.5 186.1M917.0 397.4L521.7 186.2M917.0 382.4L527.9 186.4M917.0 369.0L534.3 186.6M917.0 357.0L540.7 186.8M917.0 346.2L547.2 187.0M917.0 336.3L553.8 187.3M917.0 319.2L567.3 187.8M917.0 311.6L574.2 188.2M917.0 304.7L581.3 188.5M917.0 298.2L588.6 188.9M917.0 292.3L596.0 189.3M917.0 286.7L603.7 189.7M917.0 281.6L611.5 190.1M917.0 276.7L619.5 190.6M917.0 272.2L627.8 191.2M917.0 264.0L645.3 192.4M917.0 260.2L654.6 193.1M917.0 256.7L664.2 193.8M917.0 253.3L674.3 194.6M917.0 250.2L684.9 195.5M917.0 247.1L696.0 196.4M917.0 244.3L707.8 197.5M917.0 241.6L720.4 198.7M917.0 239.0L733.9 200.0M917.0 234.2L764.4 203.2M917.0 231.9L782.0 205.1M917.0 229.8L801.8 207.4M917.0 227.7L824.5 210.1M917.0 225.7L851.4 213.5M917.0 223.9L884.7 218.0M364.5 515.0L917.0 483.6M-5.0 502.0L917.0 454.0M-5.0 473.2L917.0 429.0M-5.0 427.4L917.0 389.2M-5.0 408.9L917.0 373.1M-5.0 392.5L917.0 358.9M-5.0 378.0L917.0 346.2M-5.0 365.1L917.0 335.0M-5.0 353.4L917.0 324.8M-5.0 342.9L917.0 315.6M-5.0 333.3L917.0 307.3M-5.0 324.6L917.0 299.7M-5.0 309.2L917.0 286.4M-5.0 302.4L917.0 280.5M-5.0 296.1L917.0 275.0M-5.0 290.3L917.0 269.9M-5.0 284.9L917.0 265.2M-5.0 279.8L917.0 260.8M-5.0 275.1L917.0 256.7M-5.0 270.7L917.0 252.9M-5.0 266.5L917.0 249.2M-5.0 258.9L917.0 242.6M-5.0 255.4L917.0 239.6M-5.0 252.1L917.0 236.7M-5.0 249.0L917.0 234.0M-5.0 246.0L917.0 231.4M-5.0 243.2L917.0 229.0M-5.0 240.5L917.0 226.7M-5.0 238.0L917.0 224.4M-5.0 235.6L916.1 222.3M-5.0 231.0L890.5 218.8M-5.0 228.9L878.1 217.1M-5.0 226.9L866.1 215.5M-5.0 225.0L854.3 213.9M-5.0 223.1L842.7 212.4M-5.0 221.3L831.4 211.0M3.6 219.5L820.2 209.6M17.1 217.7L809.2 208.3M30.2 215.9L798.4 207.0M55.7 212.7L777.2 204.6M68.2 211.1L766.8 203.4M80.4 209.6L756.4 202.3M92.5 208.2L746.2 201.2M104.4 206.8L736.0 200.2M116.3 205.5L725.8 199.2M128.0 204.2L715.7 198.2M139.6 202.9L705.6 197.3M151.2 201.7L695.5 196.4M174.4 199.4L675.1 194.7M186.0 198.3L664.8 193.8M197.7 197.2L654.4 193.0M209.5 196.2L643.8 192.3M221.5 195.2L633.0 191.5M233.6 194.2L622.0 190.8M246.1 193.3L610.6 190.1M258.9 192.3L598.8 189.4M272.2 191.4L586.6 188.8M300.9 189.6L559.7 187.5M316.9 188.8L544.6 186.9M334.8 187.9L527.6 186.4M355.9 187.1L507.4 185.9M384.2 186.2L479.9 185.4" stroke="#bdbdbd" stroke-width="1.0" fill="none"/><path d="M-5.0 235.4L126.6 204.3M105.6 236.7L238.7 193.8M225.1 234.9L316.1 188.8M340.6 233.2L380.1 186.3M452.3 231.6L438.9 185.3M560.3 230.0L497.3 185.7M664.8 228.5L560.5 187.5M766.1 227.0L636.4 191.8M864.1 225.5L748.5 201.5M-5.0 233.2L903.1 220.5M43.1 214.3L787.7 205.8M162.8 200.5L685.3 195.5M286.1 190.5L573.6 188.1" stroke="#dedede" stroke-width="1.35" fill="none"/><path d="M-5.0 272.3L105.6 236.7M-5.0 351.6L225.1 234.9M103.4 515.0L340.6 233.2M534.1 515.0L452.3 231.6M917.0 481.3L560.3 230.0M917.0 327.4L664.8 228.5M917.0 268.0L766.1 227.0M917.0 236.5L864.1 225.5M-5.0 448.7L917.0 407.7M-5.0 316.6L917.0 292.8M-5.0 262.6L917.0 245.8" stroke="#e8e8e8" stroke-width="1.6" fill="none"/><defs><linearGradient id="sg" x1="0" y1="0" x2="0" y2="1"><stop offset="0" stop-color="#fff"/><stop offset="0.55" stop-color="#fff"/><stop offset="1" stop-color="#777"/></linearGradient><mask id="sm" maskUnits="userSpaceOnUse" x="0" y="0" width="912" height="510"><rect x="351" y="101.5" width="180" height="170" fill="url(#sg)"/></mask></defs><path d="M459.5 108.0L458.8 108.0L457.4 108.0L455.4 108.0L452.8 108.0L449.8 108.0L446.4 108.0L442.8 108.0L439.2 108.0L435.6 108.0L432.2 108.0L429.2 108.0L426.6 108.0L424.6 108.0L423.2 108.0L422.5 108.0L422.5 108.0L423.2 108.0L424.6 108.0L426.6 108.0L429.2 108.0L432.2 108.0L435.6 108.0L439.2 108.0L442.8 108.0L446.4 108.0L449.8 108.0L452.8 108.0L455.4 108.0L457.4 108.0L458.8 108.0L459.5 108.0L459.5 108.0M477.1 114.0L475.7 114.0L473.0 114.0L469.0 114.0L464.0 114.0L458.1 114.0L451.5 114.0L444.6 114.0L437.5 114.0L430.5 114.0L423.9 114.0L418.0 114.0L413.0 114.0L409.1 114.0L406.3 114.0L404.9 114.0L404.9 114.0L406.3 114.0L409.0 114.0L413.0 114.0L418.0 114.0L423.9 114.0L430.5 114.0L437.4 114.0L444.5 114.0L451.5 114.0L458.1 114.0L464.0 114.0L469.0 114.0L472.9 114.0L475.7 114.0L477.1 114.0L477.1 114.0M492.8 123.6L490.8 123.6L486.9 123.6L481.3 123.6L474.0 123.6L465.6 123.6L456.1 123.6L446.1 123.6L435.9 123.6L425.9 123.6L416.5 123.6L408.0 123.6L400.8 123.6L395.1 123.6L391.2 123.6L389.2 123.6L389.2 123.6L391.2 123.6L395.1 123.6L400.7 123.6L408.0 123.6L416.4 123.6L425.9 123.6L435.9 123.6L446.1 123.6L456.1 123.6L465.5 123.6L474.0 123.6L481.2 123.6L486.9 123.6L490.8 123.6L492.8 123.6L492.8 123.6M506.0 136.3L503.5 136.3L498.6 136.3L491.5 136.3L482.4 136.3L471.8 136.3L460.0 136.3L447.4 136.3L434.6 136.3L422.1 136.3L410.3 136.3L399.6 136.3L390.6 136.3L383.4 136.3L378.5 136.3L376.0 136.3L376.0 136.3L378.5 136.3L383.4 136.3L390.5 136.3L399.6 136.3L410.2 136.3L422.0 136.3L434.6 136.3L447.4 136.3L459.9 136.3L471.7 136.3L482.4 136.3L491.4 136.3L498.6 136.3L503.5 136.3L506.0 136.3L506.0 136.3M515.9 151.6L513.0 151.6L507.4 151.6L499.2 151.6L488.8 151.6L476.5 151.6L462.9 151.6L448.4 151.6L433.7 151.6L419.2 151.6L405.6 151.6L393.3 151.6L382.9 151.6L374.7 151.6L369.0 151.6L366.1 151.6L366.1 151.6L369.0 151.6L374.6 151.6L382.8 151.6L393.2 151.6L405.5 151.6L419.1 151.6L433.6 151.6L448.3 151.6L462.8 151.6L476.4 151.6L488.7 151.6L499.1 151.6L507.3 151.6L513.0 151.6L515.9 151.6L515.9 151.6M522.0 168.6L518.9 168.6L512.8 168.6L504.0 168.6L492.7 168.6L479.4 168.6L464.7 168.6L449.0 168.6L433.1 168.6L417.4 168.6L402.7 168.6L389.4 168.6L378.1 168.6L369.2 168.6L363.1 168.6L360.0 168.6L360.0 168.6L363.1 168.6L369.2 168.6L378.0 168.6L389.3 168.6L402.6 168.6L417.3 168.6L433.0 168.6L448.9 168.6L464.6 168.6L479.3 168.6L492.6 168.6L503.9 168.6L512.8 168.6L518.9 168.6L522.0 168.6L522.0 168.6M524.1 186.5L520.9 186.5L514.7 186.5L505.6 186.5L494.0 186.5L480.4 186.5L465.3 186.5L449.2 186.5L432.9 186.5L416.8 186.5L401.7 186.5L388.1 186.5L376.5 186.5L367.4 186.5L361.1 186.5L357.9 186.5L357.9 186.5L361.1 186.5L367.3 186.5L376.4 186.5L388.0 186.5L401.6 186.5L416.7 186.5L432.8 186.5L449.1 186.5L465.2 186.5L480.3 186.5L493.9 186.5L505.5 186.5L514.6 186.5L520.9 186.5L524.1 186.5L524.1 186.5M522.0 204.4L518.9 204.4L512.8 204.4L504.0 204.4L492.7 204.4L479.4 204.4L464.7 204.4L449.0 204.4L433.1 204.4L417.4 204.4L402.7 204.4L389.4 204.4L378.1 204.4L369.2 204.4L363.1 204.4L360.0 204.4L360.0 204.4L363.1 204.4L369.2 204.4L378.0 204.4L389.3 204.4L402.6 204.4L417.3 204.4L433.0 204.4L448.9 204.4L464.6 204.4L479.3 204.4L492.6 204.4L503.9 204.4L512.8 204.4L518.9 204.4L522.0 204.4L522.0 204.4M515.9 221.4L513.0 221.4L507.4 221.4L499.2 221.4L488.8 221.4L476.5 221.4L462.9 221.4L448.4 221.4L433.7 221.4L419.2 221.4L405.6 221.4L393.3 221.4L382.9 221.4L374.7 221.4L369.0 221.4L366.1 221.4L366.1 221.4L369.0 221.4L374.6 221.4L382.8 221.4L393.2 221.4L405.5 221.4L419.1 221.4L433.6 221.4L448.3 221.4L462.8 221.4L476.4 221.4L488.7 221.4L499.1 221.4L507.3 221.4L513.0 221.4L515.9 221.4L515.9 221.4M506.0 236.7L503.5 236.7L498.6 236.7L491.5 236.7L482.4 236.7L471.8 236.7L460.0 236.7L447.4 236.7L434.6 236.7L422.1 236.7L410.3 236.7L399.6 236.7L390.6 236.7L383.4 236.7L378.5 236.7L376.0 236.7L376.0 236.7L378.5 236.7L383.4 236.7L390.5 236.7L399.6 236.7L410.2 236.7L422.0 236.7L434.6 236.7L447.4 236.7L459.9 236.7L471.7 236.7L482.4 236.7L491.4 236.7L498.6 236.7L503.5 236.7L506.0 236.7L506.0 236.7M492.8 249.4L490.8 249.4L486.9 249.4L481.3 249.4L474.0 249.4L465.6 249.4L456.1 249.4L446.1 249.4L435.9 249.4L425.9 249.4L416.5 249.4L408.0 249.4L400.8 249.4L395.1 249.4L391.2 249.4L389.2 249.4L389.2 249.4L391.2 249.4L395.1 249.4L400.7 249.4L408.0 249.4L416.4 249.4L425.9 249.4L435.9 249.4L446.1 249.4L456.1 249.4L465.5 249.4L474.0 249.4L481.2 249.4L486.9 249.4L490.8 249.4L492.8 249.4L492.8 249.4M477.1 259.0L475.7 259.0L473.0 259.0L469.0 259.0L464.0 259.0L458.1 259.0L451.5 259.0L444.6 259.0L437.5 259.0L430.5 259.0L423.9 259.0L418.0 259.0L413.0 259.0L409.1 259.0L406.3 259.0L404.9 259.0L404.9 259.0L406.3 259.0L409.0 259.0L413.0 259.0L418.0 259.0L423.9 259.0L430.5 259.0L437.4 259.0L444.5 259.0L451.5 259.0L458.1 259.0L464.0 259.0L469.0 259.0L472.9 259.0L475.7 259.0L477.1 259.0L477.1 259.0M459.5 265.0L458.8 265.0L457.4 265.0L455.4 265.0L452.8 265.0L449.8 265.0L446.4 265.0L442.8 265.0L439.2 265.0L435.6 265.0L432.2 265.0L429.2 265.0L426.6 265.0L424.6 265.0L423.2 265.0L422.5 265.0L422.5 265.0L423.2 265.0L424.6 265.0L426.6 265.0L429.2 265.0L432.2 265.0L435.6 265.0L439.2 265.0L442.8 265.0L446.4 265.0L449.8 265.0L452.8 265.0L455.4 265.0L457.4 265.0L458.8 265.0L459.5 265.0L459.5 265.0M441.0 106.0L459.5 108.0L477.1 114.0L492.8 123.6L506.0 136.3L515.9 151.6L522.0 168.6L524.1 186.5L522.0 204.4L515.9 221.4L506.0 236.7L492.8 249.4L477.1 259.0L459.5 265.0L441.0 267.0M441.0 106.0L458.8 108.0L475.7 114.0L490.8 123.6L503.5 136.3L513.0 151.6L518.9 168.6L520.9 186.5L518.9 204.4L513.0 221.4L503.5 236.7L490.8 249.4L475.7 259.0L458.8 265.0L441.0 267.0M441.0 106.0L457.4 108.0L473.0 114.0L486.9 123.6L498.6 136.3L507.4 151.6L512.8 168.6L514.7 186.5L512.8 204.4L507.4 221.4L498.6 236.7L486.9 249.4L473.0 259.0L457.4 265.0L441.0 267.0M441.0 106.0L455.4 108.0L469.0 114.0L481.3 123.6L491.5 136.3L499.2 151.6L504.0 168.6L505.6 186.5L504.0 204.4L499.2 221.4L491.5 236.7L481.3 249.4L469.0 259.0L455.4 265.0L441.0 267.0M441.0 106.0L452.8 108.0L464.0 114.0L474.0 123.6L482.4 136.3L488.8 151.6L492.7 168.6L494.0 186.5L492.7 204.4L488.8 221.4L482.4 236.7L474.0 249.4L464.0 259.0L452.8 265.0L441.0 267.0M441.0 106.0L449.8 108.0L458.1 114.0L465.6 123.6L471.8 136.3L476.5 151.6L479.4 168.6L480.4 186.5L479.4 204.4L476.5 221.4L471.8 236.7L465.6 249.4L458.1 259.0L449.8 265.0L441.0 267.0M441.0 106.0L446.4 108.0L451.5 114.0L456.1 123.6L460.0 136.3L462.9 151.6L464.7 168.6L465.3 186.5L464.7 204.4L462.9 221.4L460.0 236.7L456.1 249.4L451.5 259.0L446.4 265.0L441.0 267.0M441.0 106.0L442.8 108.0L444.6 114.0L446.1 123.6L447.4 136.3L448.4 151.6L449.0 168.6L449.2 186.5L449.0 204.4L448.4 221.4L447.4 236.7L446.1 249.4L444.6 259.0L442.8 265.0L441.0 267.0M441.0 106.0L439.2 108.0L437.5 114.0L435.9 123.6L434.6 136.3L433.7 151.6L433.1 168.6L432.9 186.5L433.1 204.4L433.7 221.4L434.6 236.7L435.9 249.4L437.5 259.0L439.2 265.0L441.0 267.0M441.0 106.0L435.6 108.0L430.5 114.0L425.9 123.6L422.1 136.3L419.2 151.6L417.4 168.6L416.8 186.5L417.4 204.4L419.2 221.4L422.1 236.7L425.9 249.4L430.5 259.0L435.6 265.0L441.0 267.0M441.0 106.0L432.2 108.0L423.9 114.0L416.5 123.6L410.3 136.3L405.6 151.6L402.7 168.6L401.7 186.5L402.7 204.4L405.6 221.4L410.3 236.7L416.5 249.4L423.9 259.0L432.2 265.0L441.0 267.0M441.0 106.0L429.2 108.0L418.0 114.0L408.0 123.6L399.6 136.3L393.3 151.6L389.4 168.6L388.1 186.5L389.4 204.4L393.3 221.4L399.6 236.7L408.0 249.4L418.0 259.0L429.2 265.0L441.0 267.0M441.0 106.0L426.6 108.0L413.0 114.0L400.8 123.6L390.6 136.3L382.9 151.6L378.1 168.6L376.5 186.5L378.1 204.4L382.9 221.4L390.6 236.7L400.8 249.4L413.0 259.0L426.6 265.0L441.0 267.0M441.0 106.0L424.6 108.0L409.1 114.0L395.1 123.6L383.4 136.3L374.7 151.6L369.2 168.6L367.4 186.5L369.2 204.4L374.7 221.4L383.4 236.7L395.1 249.4L409.1 259.0L424.6 265.0L441.0 267.0M441.0 106.0L423.2 108.0L406.3 114.0L391.2 123.6L378.5 136.3L369.0 151.6L363.1 168.6L361.1 186.5L363.1 204.4L369.0 221.4L378.5 236.7L391.2 249.4L406.3 259.0L423.2 265.0L441.0 267.0M441.0 106.0L422.5 108.0L404.9 114.0L389.2 123.6L376.0 136.3L366.1 151.6L360.0 168.6L357.9 186.5L360.0 204.4L366.1 221.4L376.0 236.7L389.2 249.4L404.9 259.0L422.5 265.0L441.0 267.0M441.0 106.0L422.5 108.0L404.9 114.0L389.2 123.6L376.0 136.3L366.1 151.6L360.0 168.6L357.9 186.5L360.0 204.4L366.1 221.4L376.0 236.7L389.2 249.4L404.9 259.0L422.5 265.0L441.0 267.0M441.0 106.0L423.2 108.0L406.3 114.0L391.2 123.6L378.5 136.3L369.0 151.6L363.1 168.6L361.1 186.5L363.1 204.4L369.0 221.4L378.5 236.7L391.2 249.4L406.3 259.0L423.2 265.0L441.0 267.0M441.0 106.0L424.6 108.0L409.0 114.0L395.1 123.6L383.4 136.3L374.6 151.6L369.2 168.6L367.3 186.5L369.2 204.4L374.6 221.4L383.4 236.7L395.1 249.4L409.0 259.0L424.6 265.0L441.0 267.0M441.0 106.0L426.6 108.0L413.0 114.0L400.7 123.6L390.5 136.3L382.8 151.6L378.0 168.6L376.4 186.5L378.0 204.4L382.8 221.4L390.5 236.7L400.7 249.4L413.0 259.0L426.6 265.0L441.0 267.0M441.0 106.0L429.2 108.0L418.0 114.0L408.0 123.6L399.6 136.3L393.2 151.6L389.3 168.6L388.0 186.5L389.3 204.4L393.2 221.4L399.6 236.7L408.0 249.4L418.0 259.0L429.2 265.0L441.0 267.0M441.0 106.0L432.2 108.0L423.9 114.0L416.4 123.6L410.2 136.3L405.5 151.6L402.6 168.6L401.6 186.5L402.6 204.4L405.5 221.4L410.2 236.7L416.4 249.4L423.9 259.0L432.2 265.0L441.0 267.0M441.0 106.0L435.6 108.0L430.5 114.0L425.9 123.6L422.0 136.3L419.1 151.6L417.3 168.6L416.7 186.5L417.3 204.4L419.1 221.4L422.0 236.7L425.9 249.4L430.5 259.0L435.6 265.0L441.0 267.0M441.0 106.0L439.2 108.0L437.4 114.0L435.9 123.6L434.6 136.3L433.6 151.6L433.0 168.6L432.8 186.5L433.0 204.4L433.6 221.4L434.6 236.7L435.9 249.4L437.4 259.0L439.2 265.0L441.0 267.0M441.0 106.0L442.8 108.0L444.5 114.0L446.1 123.6L447.4 136.3L448.3 151.6L448.9 168.6L449.1 186.5L448.9 204.4L448.3 221.4L447.4 236.7L446.1 249.4L444.5 259.0L442.8 265.0L441.0 267.0M441.0 106.0L446.4 108.0L451.5 114.0L456.1 123.6L459.9 136.3L462.8 151.6L464.6 168.6L465.2 186.5L464.6 204.4L462.8 221.4L459.9 236.7L456.1 249.4L451.5 259.0L446.4 265.0L441.0 267.0M441.0 106.0L449.8 108.0L458.1 114.0L465.5 123.6L471.7 136.3L476.4 151.6L479.3 168.6L480.3 186.5L479.3 204.4L476.4 221.4L471.7 236.7L465.5 249.4L458.1 259.0L449.8 265.0L441.0 267.0M441.0 106.0L452.8 108.0L464.0 114.0L474.0 123.6L482.4 136.3L488.7 151.6L492.6 168.6L493.9 186.5L492.6 204.4L488.7 221.4L482.4 236.7L474.0 249.4L464.0 259.0L452.8 265.0L441.0 267.0M441.0 106.0L455.4 108.0L469.0 114.0L481.2 123.6L491.4 136.3L499.1 151.6L503.9 168.6L505.5 186.5L503.9 204.4L499.1 221.4L491.4 236.7L481.2 249.4L469.0 259.0L455.4 265.0L441.0 267.0M441.0 106.0L457.4 108.0L472.9 114.0L486.9 123.6L498.6 136.3L507.3 151.6L512.8 168.6L514.6 186.5L512.8 204.4L507.3 221.4L498.6 236.7L486.9 249.4L472.9 259.0L457.4 265.0L441.0 267.0M441.0 106.0L458.8 108.0L475.7 114.0L490.8 123.6L503.5 136.3L513.0 151.6L518.9 168.6L520.9 186.5L518.9 204.4L513.0 221.4L503.5 236.7L490.8 249.4L475.7 259.0L458.8 265.0L441.0 267.0M441.0 106.0L459.5 108.0L477.1 114.0L492.8 123.6L506.0 136.3L515.9 151.6L522.0 168.6L524.1 186.5L522.0 204.4L515.9 221.4L506.0 236.7L492.8 249.4L477.1 259.0L459.5 265.0L441.0 267.0M459.5 108.0L475.7 114.0M458.8 108.0L473.0 114.0M457.4 108.0L469.0 114.0M455.4 108.0L464.0 114.0M452.8 108.0L458.1 114.0M449.8 108.0L451.5 114.0M446.4 108.0L444.6 114.0M442.8 108.0L437.5 114.0M439.2 108.0L430.5 114.0M435.6 108.0L423.9 114.0M432.2 108.0L418.0 114.0M429.2 108.0L413.0 114.0M426.6 108.0L409.1 114.0M424.6 108.0L406.3 114.0M423.2 108.0L404.9 114.0M422.5 108.0L404.9 114.0M422.5 108.0L406.3 114.0M423.2 108.0L409.0 114.0M424.6 108.0L413.0 114.0M426.6 108.0L418.0 114.0M429.2 108.0L423.9 114.0M432.2 108.0L430.5 114.0M435.6 108.0L437.4 114.0M439.2 108.0L444.5 114.0M442.8 108.0L451.5 114.0M446.4 108.0L458.1 114.0M449.8 108.0L464.0 114.0M452.8 108.0L469.0 114.0M455.4 108.0L472.9 114.0M457.4 108.0L475.7 114.0M458.8 108.0L477.1 114.0M459.5 108.0L477.1 114.0M477.1 114.0L490.8 123.6M475.7 114.0L486.9 123.6M473.0 114.0L481.3 123.6M469.0 114.0L474.0 123.6M464.0 114.0L465.6 123.6M458.1 114.0L456.1 123.6M451.5 114.0L446.1 123.6M444.6 114.0L435.9 123.6M437.5 114.0L425.9 123.6M430.5 114.0L416.5 123.6M423.9 114.0L408.0 123.6M418.0 114.0L400.8 123.6M413.0 114.0L395.1 123.6M409.1 114.0L391.2 123.6M406.3 114.0L389.2 123.6M404.9 114.0L389.2 123.6M404.9 114.0L391.2 123.6M406.3 114.0L395.1 123.6M409.0 114.0L400.7 123.6M413.0 114.0L408.0 123.6M418.0 114.0L416.4 123.6M423.9 114.0L425.9 123.6M430.5 114.0L435.9 123.6M437.4 114.0L446.1 123.6M444.5 114.0L456.1 123.6M451.5 114.0L465.5 123.6M458.1 114.0L474.0 123.6M464.0 114.0L481.2 123.6M469.0 114.0L486.9 123.6M472.9 114.0L490.8 123.6M475.7 114.0L492.8 123.6M477.1 114.0L492.8 123.6M492.8 123.6L503.5 136.3M490.8 123.6L498.6 136.3M486.9 123.6L491.5 136.3M481.3 123.6L482.4 136.3M474.0 123.6L471.8 136.3M465.6 123.6L460.0 136.3M456.1 123.6L447.4 136.3M446.1 123.6L434.6 136.3M435.9 123.6L422.1 136.3M425.9 123.6L410.3 136.3M416.5 123.6L399.6 136.3M408.0 123.6L390.6 136.3M400.8 123.6L383.4 136.3M395.1 123.6L378.5 136.3M391.2 123.6L376.0 136.3M389.2 123.6L376.0 136.3M389.2 123.6L378.5 136.3M391.2 123.6L383.4 136.3M395.1 123.6L390.5 136.3M400.7 123.6L399.6 136.3M408.0 123.6L410.2 136.3M416.4 123.6L422.0 136.3M425.9 123.6L434.6 136.3M435.9 123.6L447.4 136.3M446.1 123.6L459.9 136.3M456.1 123.6L471.7 136.3M465.5 123.6L482.4 136.3M474.0 123.6L491.4 136.3M481.2 123.6L498.6 136.3M486.9 123.6L503.5 136.3M490.8 123.6L506.0 136.3M492.8 123.6L506.0 136.3M506.0 136.3L513.0 151.6M503.5 136.3L507.4 151.6M498.6 136.3L499.2 151.6M491.5 136.3L488.8 151.6M482.4 136.3L476.5 151.6M471.8 136.3L462.9 151.6M460.0 136.3L448.4 151.6M447.4 136.3L433.7 151.6M434.6 136.3L419.2 151.6M422.1 136.3L405.6 151.6M410.3 136.3L393.3 151.6M399.6 136.3L382.9 151.6M390.6 136.3L374.7 151.6M383.4 136.3L369.0 151.6M378.5 136.3L366.1 151.6M376.0 136.3L366.1 151.6M376.0 136.3L369.0 151.6M378.5 136.3L374.6 151.6M383.4 136.3L382.8 151.6M390.5 136.3L393.2 151.6M399.6 136.3L405.5 151.6M410.2 136.3L419.1 151.6M422.0 136.3L433.6 151.6M434.6 136.3L448.3 151.6M447.4 136.3L462.8 151.6M459.9 136.3L476.4 151.6M471.7 136.3L488.7 151.6M482.4 136.3L499.1 151.6M491.4 136.3L507.3 151.6M498.6 136.3L513.0 151.6M503.5 136.3L515.9 151.6M506.0 136.3L515.9 151.6M515.9 151.6L518.9 168.6M513.0 151.6L512.8 168.6M507.4 151.6L504.0 168.6M499.2 151.6L492.7 168.6M488.8 151.6L479.4 168.6M476.5 151.6L464.7 168.6M462.9 151.6L449.0 168.6M448.4 151.6L433.1 168.6M433.7 151.6L417.4 168.6M419.2 151.6L402.7 168.6M405.6 151.6L389.4 168.6M393.3 151.6L378.1 168.6M382.9 151.6L369.2 168.6M374.7 151.6L363.1 168.6M369.0 151.6L360.0 168.6M366.1 151.6L360.0 168.6M366.1 151.6L363.1 168.6M369.0 151.6L369.2 168.6M374.6 151.6L378.0 168.6M382.8 151.6L389.3 168.6M393.2 151.6L402.6 168.6M405.5 151.6L417.3 168.6M419.1 151.6L433.0 168.6M433.6 151.6L448.9 168.6M448.3 151.6L464.6 168.6M462.8 151.6L479.3 168.6M476.4 151.6L492.6 168.6M488.7 151.6L503.9 168.6M499.1 151.6L512.8 168.6M507.3 151.6L518.9 168.6M513.0 151.6L522.0 168.6M515.9 151.6L522.0 168.6M522.0 168.6L520.9 186.5M518.9 168.6L514.7 186.5M512.8 168.6L505.6 186.5M504.0 168.6L494.0 186.5M492.7 168.6L480.4 186.5M479.4 168.6L465.3 186.5M464.7 168.6L449.2 186.5M449.0 168.6L432.9 186.5M433.1 168.6L416.8 186.5M417.4 168.6L401.7 186.5M402.7 168.6L388.1 186.5M389.4 168.6L376.5 186.5M378.1 168.6L367.4 186.5M369.2 168.6L361.1 186.5M363.1 168.6L357.9 186.5M360.0 168.6L357.9 186.5M360.0 168.6L361.1 186.5M363.1 168.6L367.3 186.5M369.2 168.6L376.4 186.5M378.0 168.6L388.0 186.5M389.3 168.6L401.6 186.5M402.6 168.6L416.7 186.5M417.3 168.6L432.8 186.5M433.0 168.6L449.1 186.5M448.9 168.6L465.2 186.5M464.6 168.6L480.3 186.5M479.3 168.6L493.9 186.5M492.6 168.6L505.5 186.5M503.9 168.6L514.6 186.5M512.8 168.6L520.9 186.5M518.9 168.6L524.1 186.5M522.0 168.6L524.1 186.5M524.1 186.5L518.9 204.4M520.9 186.5L512.8 204.4M514.7 186.5L504.0 204.4M505.6 186.5L492.7 204.4M494.0 186.5L479.4 204.4M480.4 186.5L464.7 204.4M465.3 186.5L449.0 204.4M449.2 186.5L433.1 204.4M432.9 186.5L417.4 204.4M416.8 186.5L402.7 204.4M401.7 186.5L389.4 204.4M388.1 186.5L378.1 204.4M376.5 186.5L369.2 204.4M367.4 186.5L363.1 204.4M361.1 186.5L360.0 204.4M357.9 186.5L360.0 204.4M357.9 186.5L363.1 204.4M361.1 186.5L369.2 204.4M367.3 186.5L378.0 204.4M376.4 186.5L389.3 204.4M388.0 186.5L402.6 204.4M401.6 186.5L417.3 204.4M416.7 186.5L433.0 204.4M432.8 186.5L448.9 204.4M449.1 186.5L464.6 204.4M465.2 186.5L479.3 204.4M480.3 186.5L492.6 204.4M493.9 186.5L503.9 204.4M505.5 186.5L512.8 204.4M514.6 186.5L518.9 204.4M520.9 186.5L522.0 204.4M524.1 186.5L522.0 204.4M522.0 204.4L513.0 221.4M518.9 204.4L507.4 221.4M512.8 204.4L499.2 221.4M504.0 204.4L488.8 221.4M492.7 204.4L476.5 221.4M479.4 204.4L462.9 221.4M464.7 204.4L448.4 221.4M449.0 204.4L433.7 221.4M433.1 204.4L419.2 221.4M417.4 204.4L405.6 221.4M402.7 204.4L393.3 221.4M389.4 204.4L382.9 221.4M378.1 204.4L374.7 221.4M369.2 204.4L369.0 221.4M363.1 204.4L366.1 221.4M360.0 204.4L366.1 221.4M360.0 204.4L369.0 221.4M363.1 204.4L374.6 221.4M369.2 204.4L382.8 221.4M378.0 204.4L393.2 221.4M389.3 204.4L405.5 221.4M402.6 204.4L419.1 221.4M417.3 204.4L433.6 221.4M433.0 204.4L448.3 221.4M448.9 204.4L462.8 221.4M464.6 204.4L476.4 221.4M479.3 204.4L488.7 221.4M492.6 204.4L499.1 221.4M503.9 204.4L507.3 221.4M512.8 204.4L513.0 221.4M518.9 204.4L515.9 221.4M522.0 204.4L515.9 221.4M515.9 221.4L503.5 236.7M513.0 221.4L498.6 236.7M507.4 221.4L491.5 236.7M499.2 221.4L482.4 236.7M488.8 221.4L471.8 236.7M476.5 221.4L460.0 236.7M462.9 221.4L447.4 236.7M448.4 221.4L434.6 236.7M433.7 221.4L422.1 236.7M419.2 221.4L410.3 236.7M405.6 221.4L399.6 236.7M393.3 221.4L390.6 236.7M382.9 221.4L383.4 236.7M374.7 221.4L378.5 236.7M369.0 221.4L376.0 236.7M366.1 221.4L376.0 236.7M366.1 221.4L378.5 236.7M369.0 221.4L383.4 236.7M374.6 221.4L390.5 236.7M382.8 221.4L399.6 236.7M393.2 221.4L410.2 236.7M405.5 221.4L422.0 236.7M419.1 221.4L434.6 236.7M433.6 221.4L447.4 236.7M448.3 221.4L459.9 236.7M462.8 221.4L471.7 236.7M476.4 221.4L482.4 236.7M488.7 221.4L491.4 236.7M499.1 221.4L498.6 236.7M507.3 221.4L503.5 236.7M513.0 221.4L506.0 236.7M515.9 221.4L506.0 236.7M506.0 236.7L490.8 249.4M503.5 236.7L486.9 249.4M498.6 236.7L481.3 249.4M491.5 236.7L474.0 249.4M482.4 236.7L465.6 249.4M471.8 236.7L456.1 249.4M460.0 236.7L446.1 249.4M447.4 236.7L435.9 249.4M434.6 236.7L425.9 249.4M422.1 236.7L416.5 249.4M410.3 236.7L408.0 249.4M399.6 236.7L400.8 249.4M390.6 236.7L395.1 249.4M383.4 236.7L391.2 249.4M378.5 236.7L389.2 249.4M376.0 236.7L389.2 249.4M376.0 236.7L391.2 249.4M378.5 236.7L395.1 249.4M383.4 236.7L400.7 249.4M390.5 236.7L408.0 249.4M399.6 236.7L416.4 249.4M410.2 236.7L425.9 249.4M422.0 236.7L435.9 249.4M434.6 236.7L446.1 249.4M447.4 236.7L456.1 249.4M459.9 236.7L465.5 249.4M471.7 236.7L474.0 249.4M482.4 236.7L481.2 249.4M491.4 236.7L486.9 249.4M498.6 236.7L490.8 249.4M503.5 236.7L492.8 249.4M506.0 236.7L492.8 249.4M492.8 249.4L475.7 259.0M490.8 249.4L473.0 259.0M486.9 249.4L469.0 259.0M481.3 249.4L464.0 259.0M474.0 249.4L458.1 259.0M465.6 249.4L451.5 259.0M456.1 249.4L444.6 259.0M446.1 249.4L437.5 259.0M435.9 249.4L430.5 259.0M425.9 249.4L423.9 259.0M416.5 249.4L418.0 259.0M408.0 249.4L413.0 259.0M400.8 249.4L409.1 259.0M395.1 249.4L406.3 259.0M391.2 249.4L404.9 259.0M389.2 249.4L404.9 259.0M389.2 249.4L406.3 259.0M391.2 249.4L409.0 259.0M395.1 249.4L413.0 259.0M400.7 249.4L418.0 259.0M408.0 249.4L423.9 259.0M416.4 249.4L430.5 259.0M425.9 249.4L437.4 259.0M435.9 249.4L444.5 259.0M446.1 249.4L451.5 259.0M456.1 249.4L458.1 259.0M465.5 249.4L464.0 259.0M474.0 249.4L469.0 259.0M481.2 249.4L472.9 259.0M486.9 249.4L475.7 259.0M490.8 249.4L477.1 259.0M492.8 249.4L477.1 259.0M477.1 259.0L458.8 265.0M475.7 259.0L457.4 265.0M473.0 259.0L455.4 265.0M469.0 259.0L452.8 265.0M464.0 259.0L449.8 265.0M458.1 259.0L446.4 265.0M451.5 259.0L442.8 265.0M444.6 259.0L439.2 265.0M437.5 259.0L435.6 265.0M430.5 259.0L432.2 265.0M423.9 259.0L429.2 265.0M418.0 259.0L426.6 265.0M413.0 259.0L424.6 265.0M409.1 259.0L423.2 265.0M406.3 259.0L422.5 265.0M404.9 259.0L422.5 265.0M404.9 259.0L423.2 265.0M406.3 259.0L424.6 265.0M409.0 259.0L426.6 265.0M413.0 259.0L429.2 265.0M418.0 259.0L432.2 265.0M423.9 259.0L435.6 265.0M430.5 259.0L439.2 265.0M437.4 259.0L442.8 265.0M444.5 259.0L446.4 265.0M451.5 259.0L449.8 265.0M458.1 259.0L452.8 265.0M464.0 259.0L455.4 265.0M469.0 259.0L457.4 265.0M472.9 259.0L458.8 265.0M475.7 259.0L459.5 265.0M477.1 259.0L459.5 265.0" stroke="#16b416" stroke-width="1" fill="none" opacity="0.95" mask="url(#sm)"/><circle cx="445.9" cy="188.7" r="29.8" stroke="#dc2f3f" stroke-width="6.8" fill="none"/><path d="M415.9 194.7 A30.5 30.5 0 0 0 469.9 207.7" stroke="#b8202e" stroke-width="2" fill="none"/><g transform="translate(432.6 249.6) scale(1.0)"><path d="M-7.5 34.5h13l-1 7-3.3 30h-1.4l-3.3-30z" fill="#1a5bcc"/><path d="M-7 34.5h13v1.5h-13z" fill="#33404e"/><path d="M-10 12.5c0-1.8 1-2.8 2.8-3.2l4.5-1h6.4l4.5 1c1.8.4 2.8 1.4 2.8 3.2l-1 2.2-1.5 20h-15l-1.5-20z" fill="#b9c6cf"/><path d="M-10 12.5-11.6 24l-.6 14 1.6.3 1.6-13.5 1.2-8zM10 12.5l1.6 11.5.6 14-1.6.3-1.6-13.5-1.2-8z" fill="#aab7c0"/><rect x="-1.6" y="3" width="3.2" height="6" fill="#aebbc5"/><ellipse cx="0" cy="0" rx="3.3" ry="3.9" fill="#b3c0ca"/></g><g transform="translate(477.6 249.2) scale(0.96)"><path d="M-7.5 34.5h13l-1 7-3.3 30h-1.4l-3.3-30z" fill="#1a5bcc"/><path d="M-7 34.5h13v1.5h-13z" fill="#33404e"/><path d="M-10 12.5c0-1.8 1-2.8 2.8-3.2l4.5-1h6.4l4.5 1c1.8.4 2.8 1.4 2.8 3.2l-1 2.2-1.5 20h-15l-1.5-20z" fill="#b9c6cf"/><path d="M-10 12.5-11.6 24l-.6 14 1.6.3 1.6-13.5 1.2-8zM10 12.5l1.6 11.5.6 14-1.6.3-1.6-13.5-1.2-8z" fill="#aab7c0"/><rect x="-1.6" y="3" width="3.2" height="6" fill="#aebbc5"/><ellipse cx="0" cy="0" rx="3.3" ry="3.9" fill="#b3c0ca"/></g><g transform="translate(526.4 247.2) scale(0.98)"><path d="M-7.5 34.5h13l-1 7-3.3 30h-1.4l-3.3-30z" fill="#1a5bcc"/><path d="M-7 34.5h13v1.5h-13z" fill="#33404e"/><path d="M-10 12.5c0-1.8 1-2.8 2.8-3.2l4.5-1h6.4l4.5 1c1.8.4 2.8 1.4 2.8 3.2l-1 2.2-1.5 20h-15l-1.5-20z" fill="#b9c6cf"/><path d="M-10 12.5-11.6 24l-.6 14 1.6.3 1.6-13.5 1.2-8zM10 12.5l1.6 11.5.6 14-1.6.3-1.6-13.5-1.2-8z" fill="#aab7c0"/><rect x="-1.6" y="3" width="3.2" height="6" fill="#aebbc5"/><ellipse cx="0" cy="0" rx="3.3" ry="3.9" fill="#b3c0ca"/></g><circle cx="825.9" cy="467.4" r="8.9" fill="#0b6a0b" opacity="0.95"/><circle cx="822.6" cy="413.1" r="10.4" fill="#8a1414" opacity="0.75"/><circle cx="869.9" cy="424.2" r="10.7" fill="#0d2f96" opacity="0.85"/><path d="M826 393V421" stroke="#10a010" stroke-width="2.2"/><path d="M830 424.20000000000005H862" stroke="#0000f0" stroke-width="2.2"/><text x="822.5999999999999" y="418.20000000000005" font-family="Liberation Sans" font-weight="bold" font-size="14" fill="#c8a0a0" text-anchor="middle">X</text><text x="869.9000000000001" y="429.5" font-family="Liberation Sans" font-weight="bold" font-size="14" fill="#9aa0b8" text-anchor="middle">Z</text><rect x="821.3" y="419.5" width="9.4" height="10" fill="#f4f000"/><circle cx="825.9" cy="382.2" r="11" fill="#10b010" opacity="1"/><text x="825.9000000000001" y="388" font-family="Liberation Sans" font-weight="bold" font-size="15" fill="#ffffff" text-anchor="middle">Y</text><circle cx="782.2" cy="425.5" r="8.7" fill="#0a48ff" opacity="1"/><circle cx="829.4" cy="436.3" r="8.7" fill="#f01212" opacity="1"/></svg>
<svg style="position:absolute;left:1284px;top:160px;" width="22" height="22" viewBox="0 0 24 24" fill="none" stroke="#e8e8e8" stroke-width="1.6" stroke-linecap="round" stroke-linejoin="round"><circle cx="12" cy="12" r="3"/><path d="M19.4 15a1.65 1.65 0 0 0 .33 1.82l.06.06a2 2 0 1 1-2.83 2.83l-.06-.06a1.65 1.65 0 0 0-1.82-.33 1.65 1.65 0 0 0-1 1.51V21a2 2 0 1 1-4 0v-.09A1.65 1.65 0 0 0 9 19.4a1.65 1.65 0 0 0-1.82.33l-.06.06a2 2 0 1 1-2.83-2.83l.06-.06A1.65 1.65 0 0 0 4.68 15a1.65 1.65 0 0 0-1.51-1H3a2 2 0 1 1 0-4h.09A1.65 1.65 0 0 0 4.6 9a1.65 1.65 0 0 0-.33-1.82l-.06-.06a2 2 0 1 1 2.83-2.83l.06.06A1.65 1.65 0 0 0 9 4.68a1.65 1.65 0 0 0 1-1.51V3a2 2 0 1 1 4 0v.09a1.65 1.65 0 0 0 1 1.51 1.65 1.65 0 0 0 1.82-.33l.06-.06a2 2 0 1 1 2.83 2.83l-.06.06A1.65 1.65 0 0 0 19.4 9a1.65 1.65 0 0 0 1.51 1H21a2 2 0 1 1 0 4h-.09a1.65 1.65 0 0 0-1.51 1z"/></svg>
<div style="left:423.6px;top:613.6px;width:25.19999999999999px;height:26px;background:transparent;border:1.5px solid #8a8a8a;border-radius:4px;box-sizing:border-box;box-shadow:inset 0 -2px 0 rgba(150,150,150,.45)"></div>
<div class="t" style="left:432.40000000000003px;top:619.65px;font-size:11px;line-height:11px;color:#e8e8e8;font-family:'Liberation Sans',sans-serif;font-weight:bold;">F</div>
<div class="t" style="left:456.7px;top:620.95px;font-size:13px;line-height:13px;color:#e8e8e8;font-family:'Liberation Sans',sans-serif;">Focus</div>
<div style="left:499px;top:613.6px;width:25.799999999999955px;height:26px;background:transparent;border:1.5px solid #8a8a8a;border-radius:4px;box-sizing:border-box;box-shadow:inset 0 -2px 0 rgba(150,150,150,.45)"></div>
<div class="t" style="left:508.09999999999997px;top:619.65px;font-size:11px;line-height:11px;color:#e8e8e8;font-family:'Liberation Sans',sans-serif;font-weight:bold;">Q</div>
<div style="left:533.9px;top:613.6px;width:25.700000000000045px;height:26px;background:transparent;border:1.5px solid #8a8a8a;border-radius:4px;box-sizing:border-box;box-shadow:inset 0 -2px 0 rgba(150,150,150,.45)"></div>
<div class="t" style="left:542.95px;top:619.65px;font-size:11px;line-height:11px;color:#e8e8e8;font-family:'Liberation Sans',sans-serif;font-weight:bold;">E</div>
<div class="t" style="left:567.5px;top:620.87px;font-size:13.1px;line-height:13.1px;color:#e8e8e8;font-family:'Liberation Sans',sans-serif;">Rotate</div>
<div style="left:614.2px;top:613.6px;width:25.199999999999932px;height:26px;background:transparent;border:1.5px solid #8a8a8a;border-radius:4px;box-sizing:border-box;box-shadow:inset 0 -2px 0 rgba(150,150,150,.45)"></div>
<div class="t" style="left:623.0px;top:619.65px;font-size:11px;line-height:11px;color:#e8e8e8;font-family:'Liberation Sans',sans-serif;font-weight:bold;">G</div>
<div class="t" style="left:647.8px;top:620.87px;font-size:13.1px;line-height:13.1px;color:#e8e8e8;font-family:'Liberation Sans',sans-serif;">Grab</div>
<div style="left:685px;top:613.6px;width:25.600000000000023px;height:26px;background:transparent;border:1.5px solid #8a8a8a;border-radius:4px;box-sizing:border-box;box-shadow:inset 0 -2px 0 rgba(150,150,150,.45)"></div>
<div class="t" style="left:689.8px;top:620.92px;font-size:9.5px;line-height:9.5px;color:#d8d8d8;font-family:'Liberation Sans',sans-serif;font-weight:bold;">Esc</div>
<div class="t" style="left:718.5px;top:620.78px;font-size:13.2px;line-height:13.2px;color:#e8e8e8;font-family:'Liberation Sans',sans-serif;">Deselect</div>
</body></html>
